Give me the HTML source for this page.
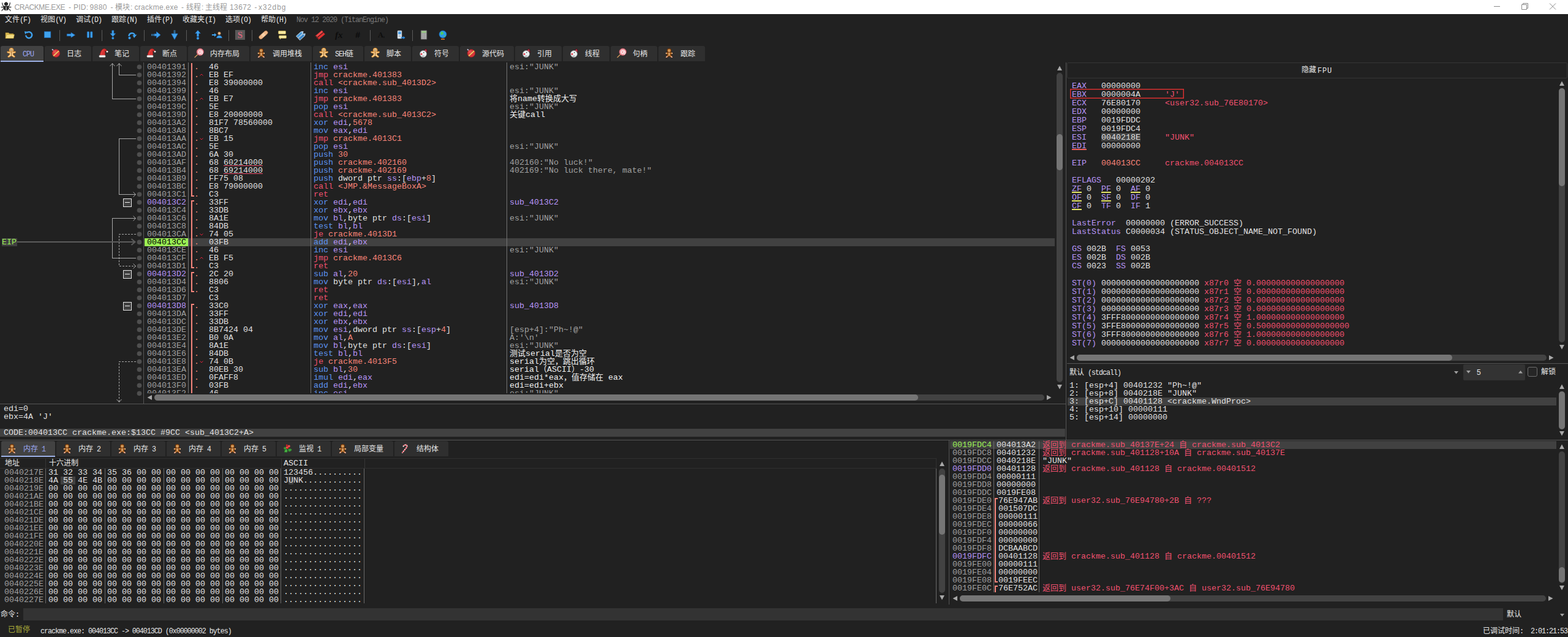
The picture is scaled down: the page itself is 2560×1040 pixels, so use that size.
<!DOCTYPE html><html><head><meta charset="utf-8"><title>x32dbg</title><style>
*{margin:0;padding:0;box-sizing:border-box}
html,body{width:2560px;height:1040px;overflow:hidden;background:#212121}
body{position:relative;font-family:"Liberation Mono","Noto Sans CJK SC",monospace;color:#e0e0e0}
.t{position:absolute;white-space:pre;}
.m{font-family:"Liberation Mono","Noto Sans CJK SC",monospace;font-size:13.333px;line-height:13px;height:13px;letter-spacing:0px}
.r{font-family:"Liberation Mono","Noto Sans CJK SC",monospace;font-size:13.333px;line-height:14px;height:14px}
.u{font-family:"Liberation Mono","Noto Sans CJK SC",monospace;font-size:11.667px;line-height:12px;height:12px;letter-spacing:-1px}
.s{font-family:"Liberation Sans","Noto Sans CJK SC",sans-serif;font-size:12px;line-height:14px}
.ua{display:inline-block;transform:scaleY(1.1);transform-origin:0 78%}
.k{display:inline-block;height:0;line-height:0;position:relative;vertical-align:baseline;letter-spacing:0;white-space:nowrap;font-family:"Liberation Sans","Noto Sans CJK SC",sans-serif;font-size:12px}
.m .k,.r .k{font-size:13px}
svg.i{position:absolute;overflow:visible}
</style></head><body><div style="position:absolute;left:0px;top:0px;width:2560px;height:23px;background:#ffffff;"></div>
<svg class="i" style="left:0;top:0" width="20" height="20" viewBox="0 0 20 20"><path d="M10 3.200c1.200 0 1.900 .9 2.400 1.600c.9 .4 1.100 1.500 .7 2.500c-.5 1.300-1.700 1.800-3.100 1.800s-2.600-.5-3.100-1.800c-.4-1-.2-2.100 .7-2.500c.5-.7 1.200-1.600 2.400-1.600z" fill="#262626"/><path d="M5.900 10c2.500-.6 5.700-.6 8.200 0c.8 2.500 .4 5-1.400 6.500c-1.500 1.100-3.900 1.100-5.400 0c-1.800-1.500-2.200-4-1.400-6.500z" fill="#262626"/><rect x="9.300" y="11.200" width="1.500" height="5.600" fill="#b4b4b4"/><path d="M6.600 10.800C4.800 9.800 4 7.500 3.600 4.800M13.400 10.800C15.200 9.800 16 7.500 16.400 4.600M6 11.600H2M14 11.600H18M6.600 14C4.800 14.600 3.600 15.800 3 17.600M13.400 14C15.200 14.600 16.400 15.800 17 17.600" stroke="#262626" stroke-width="1.200" fill="none" stroke-linecap="round"/></svg>
<div class="t s" style="left:23.5px;top:5px;color:#9a9a9a;letter-spacing:-0.436px;font-size:12px">CRACKME.EXE</div>
<div class="t s" style="left:112px;top:5px;color:#9a9a9a;letter-spacing:0.003px;font-size:12px">-</div>
<div class="t s" style="left:120px;top:5px;color:#9a9a9a;letter-spacing:0.220px;font-size:12px">PID:</div>
<div class="t s" style="left:146.5px;top:5px;color:#9a9a9a;letter-spacing:0.435px;font-size:12px">9880</div>
<div class="t s" style="left:180.5px;top:5px;color:#9a9a9a;letter-spacing:0.003px;font-size:12px">-</div>
<div class="t s" style="left:213px;top:5px;color:#9a9a9a;letter-spacing:-0.834px;font-size:12px">:</div>
<div class="t s" style="left:219.5px;top:5px;color:#9a9a9a;letter-spacing:0.298px;font-size:12px">crackme.exe</div>
<div class="t s" style="left:296px;top:5px;color:#9a9a9a;letter-spacing:0.003px;font-size:12px">-</div>
<div class="t s" style="left:329px;top:5px;color:#9a9a9a;letter-spacing:-0.834px;font-size:12px">:</div>
<div class="t s" style="left:375px;top:5px;color:#9a9a9a;letter-spacing:0.408px;font-size:12px">13672</div>
<div class="t s" style="left:415.5px;top:5px;color:#9a9a9a;letter-spacing:0.003px;font-size:12px">-</div>
<div class="t s" style="left:422px;top:5px;color:#9a9a9a;letter-spacing:1.027px;font-size:12px">x32dbg</div>
<div class="t s" style="left:188px;top:5px;color:#9a9a9a;"><span class="k" style="width:24px">模块</span></div>
<div class="t s" style="left:304px;top:5px;color:#9a9a9a;"><span class="k" style="width:24px">线程</span></div>
<div class="t s" style="left:335px;top:5px;color:#9a9a9a;"><span class="k" style="width:36px">主线程</span></div>
<svg class="i" style="left:2430px;top:0" width="130" height="23" viewBox="0 0 130 23" fill="none" stroke="#8a8a8a" stroke-width="1"><path d="M9 10.500h10"/><path d="M54.500 7.500h8v8h-8zM56.500 7.500v-2h8v8h-2"/><path d="M100 5.500l10 10M110 5.500l-10 10"/></svg>
<div class="t u" style="left:8px;top:27px;color:#e6e6e6;"><span class="k" style="width:24px">文件</span><span class="ua">(F)</span></div>
<div class="t u" style="left:66px;top:27px;color:#e6e6e6;"><span class="k" style="width:24px">视图</span><span class="ua">(V)</span></div>
<div class="t u" style="left:124px;top:27px;color:#e6e6e6;"><span class="k" style="width:24px">调试</span><span class="ua">(D)</span></div>
<div class="t u" style="left:182px;top:27px;color:#e6e6e6;"><span class="k" style="width:24px">跟踪</span><span class="ua">(N)</span></div>
<div class="t u" style="left:240px;top:27px;color:#e6e6e6;"><span class="k" style="width:24px">插件</span><span class="ua">(P)</span></div>
<div class="t u" style="left:298px;top:27px;color:#e6e6e6;"><span class="k" style="width:36px">收藏夹</span><span class="ua">(I)</span></div>
<div class="t u" style="left:368px;top:27px;color:#e6e6e6;"><span class="k" style="width:24px">选项</span><span class="ua">(O)</span></div>
<div class="t u" style="left:426px;top:27px;color:#e6e6e6;"><span class="k" style="width:24px">帮助</span><span class="ua">(H)</span></div>
<div class="t u" style="left:484px;top:27px;color:#7a7a7a;"><span class="ua">Nov 12 2020 (TitanEngine)</span></div>
<svg class="i" style="left:8px;top:49px" width="16" height="16" viewBox="0 0 16 16"><path d="M1 4.500h5l1.500 1.500H14v7.500H1z" fill="#d9b850" stroke="#a58428" stroke-width=".6"/><path d="M1 13.500L3 7.500h12.500L14 13.500z" fill="#f3dc82" stroke="#b89a38" stroke-width=".6"/></svg>
<svg class="i" style="left:39px;top:49px" width="16" height="16" viewBox="0 0 16 16"><path d="M3.200 8.500a5 5 0 1 0 1.600-4" fill="none" stroke="#3fa2ee" stroke-width="2.400"/><path d="M.8 2.200l5.600 .6l-4.200 4.200z" fill="#3fa2ee"/></svg>
<svg class="i" style="left:70px;top:49px" width="16" height="16" viewBox="0 0 16 16"><rect x="2.300" y="2.700" width="10.500" height="9.800" fill="#3fa2ee" stroke="#1f6fc0" stroke-width=".7"/></svg>
<div style="position:absolute;left:97px;top:49px;width:1px;height:18px;background:#5a5a5a;"></div>
<svg class="i" style="left:108px;top:49px" width="16" height="16" viewBox="0 0 16 16"><path d="M1.300 6.600h6.700V4.200L14.500 8.200l-6.500 4V9.800H1.300z" fill="#3fa2ee" stroke="#1f6fc0" stroke-width=".7"/></svg>
<svg class="i" style="left:139px;top:49px" width="16" height="16" viewBox="0 0 16 16"><rect x="3.300" y="2.700" width="3.200" height="9.800" rx=".8" fill="#3fa2ee" stroke="#1f6fc0" stroke-width=".6"/><rect x="8.700" y="2.700" width="3.200" height="9.800" rx=".8" fill="#3fa2ee" stroke="#1f6fc0" stroke-width=".6"/></svg>
<div style="position:absolute;left:166px;top:49px;width:1px;height:18px;background:#5a5a5a;"></div>
<svg class="i" style="left:177px;top:49px" width="16" height="16" viewBox="0 0 16 16"><path d="M5.800 .8h3v5h2.800L7.300 10.800L3 5.800h2.800z" fill="#3fa2ee" stroke="#1f6fc0" stroke-width=".6"/><circle cx="7.300" cy="13.300" r="1.700" fill="#3fa2ee" stroke="#1f6fc0" stroke-width=".6"/></svg>
<svg class="i" style="left:208px;top:49px" width="16" height="16" viewBox="0 0 16 16"><path d="M2.500 10a5 5 0 0 1 9.500-2" fill="none" stroke="#3fa2ee" stroke-width="2.400"/><path d="M8.500 8.500l7-1l-4.500 5.500z" fill="#3fa2ee"/><circle cx="3.500" cy="13" r="1.900" fill="#3fa2ee" stroke="#1f6fc0" stroke-width=".6"/></svg>
<div style="position:absolute;left:235px;top:49px;width:1px;height:18px;background:#5a5a5a;"></div>
<svg class="i" style="left:246px;top:49px" width="16" height="16" viewBox="0 0 16 16"><path d="M6 6.300h3.500V2.800L16 8l-6.500 5.200V9.700H6z" fill="#3fa2ee" stroke="#1f6fc0" stroke-width=".7"/><path d="M1 6.500h4.500v3H1z" fill="#3fa2ee" opacity=".75"/><path d="M2.500 6v4M4 6v4" stroke="#212121" stroke-width=".5"/></svg>
<svg class="i" style="left:277px;top:49px" width="16" height="16" viewBox="0 0 16 16"><path d="M6.300 6h-3.500L8 15.500l5.200-9.500H9.700V6z" fill="#3fa2ee" stroke="#1f6fc0" stroke-width=".7"/><path d="M6.500 .5h3v5h-3z" fill="#3fa2ee" opacity=".75"/><path d="M6 2h4M6 3.500h4" stroke="#212121" stroke-width=".5"/></svg>
<div style="position:absolute;left:304px;top:49px;width:1px;height:18px;background:#5a5a5a;"></div>
<svg class="i" style="left:315px;top:49px" width="16" height="16" viewBox="0 0 16 16"><path d="M6.500 10.500h3V5.500h2.800L8 .5L3.700 5.500h2.800z" fill="#3fa2ee" stroke="#1f6fc0" stroke-width=".6"/><circle cx="8" cy="13.500" r="1.900" fill="#3fa2ee" stroke="#1f6fc0" stroke-width=".6"/></svg>
<svg class="i" style="left:346px;top:49px" width="16" height="16" viewBox="0 0 16 16"><path d="M0 7h4V5l3.500 3L4 11V9H0z" fill="#3fa2ee"/><circle cx="12" cy="5.500" r="2.400" fill="#e8b888" stroke="#8a5a30" stroke-width=".5"/><path d="M7.500 13c.5-3 2.500-4 4.500-4s4 1 4.500 4z" fill="#3fa2ee" stroke="#1f6fc0" stroke-width=".5"/></svg>
<div style="position:absolute;left:373px;top:49px;width:1px;height:18px;background:#5a5a5a;"></div>
<svg class="i" style="left:384px;top:49px" width="16" height="16" viewBox="0 0 16 16"><rect width="16" height="16" fill="#585858"/><text x="8" y="13" text-anchor="middle" font-family="Liberation Serif" font-weight="bold" font-size="15" fill="#d0647a">S</text></svg>
<div style="position:absolute;left:411px;top:49px;width:1px;height:18px;background:#5a5a5a;"></div>
<svg class="i" style="left:422px;top:49px" width="16" height="16" viewBox="0 0 16 16"><g transform="rotate(-42 8 8)"><rect x="-.5" y="5" width="17" height="6" rx="3" fill="#f0b888" stroke="#c08050" stroke-width=".6"/><rect x="5.500" y="5.300" width="5" height="5.400" fill="#f8d0a8"/></g></svg>
<svg class="i" style="left:453px;top:49px" width="16" height="16" viewBox="0 0 16 16"><rect x="1.500" y="1.500" width="12" height="5" rx="1" fill="#f6e8a0" stroke="#c8a840" stroke-width=".6"/><rect x="2.500" y="9" width="12" height="4.500" rx="1" fill="#f6e8a0" stroke="#c8a840" stroke-width=".6"/><path d="M4 13.500v2l2-2z" fill="#f6e8a0"/></svg>
<svg class="i" style="left:484px;top:49px" width="16" height="16" viewBox="0 0 16 16"><g transform="rotate(-42 8 8)"><path d="M.5 3.800h10.500l3 2.100l-3 2.100H.5z" fill="#4a9ad8" stroke="#e4f0fa" stroke-width=".8"/><path d="M.5 8.600h10.500l3 2.100l-3 2.100H.5z" fill="#3a86c8" stroke="#e4f0fa" stroke-width=".8"/><circle cx="11.300" cy="5.900" r=".7" fill="#e4f0fa"/><circle cx="11.300" cy="10.700" r=".7" fill="#e4f0fa"/></g></svg>
<svg class="i" style="left:515px;top:49px" width="16" height="16" viewBox="0 0 16 16"><g transform="rotate(-40 8 8)"><path d="M.5 4h14v3.400H.5l1.700-1.700z" fill="#f04848" stroke="#b02020" stroke-width=".4"/><path d="M.5 8.600h14v3.400H.5l1.700-1.700z" fill="#e03030" stroke="#b02020" stroke-width=".4"/></g></svg>
<svg class="i" style="left:546px;top:49px" width="16" height="16" viewBox="0 0 16 16"><text x="1" y="13" font-family="Liberation Serif" font-style="italic" font-weight="bold" font-size="15" fill="#0c0c0c">fx</text></svg>
<svg class="i" style="left:577px;top:49px" width="16" height="16" viewBox="0 0 16 16"><text x="3" y="13" font-family="Liberation Sans" font-style="italic" font-weight="bold" font-size="14" fill="#0c0c0c">#</text></svg>
<div style="position:absolute;left:604px;top:49px;width:1px;height:18px;background:#5a5a5a;"></div>
<svg class="i" style="left:615px;top:49px" width="16" height="16" viewBox="0 0 16 16"><text x="2" y="12" font-family="Liberation Serif" font-weight="bold" font-size="12" fill="#0c0c0c">A</text><text x="10" y="13" font-family="Liberation Serif" font-size="7" fill="#0c0c0c">a</text></svg>
<svg class="i" style="left:646px;top:49px" width="16" height="16" viewBox="0 0 16 16"><rect x="3" y="1" width="7" height="13" rx="1" fill="#e8eef4" stroke="#8898a8" stroke-width=".6"/><rect x="4.200" y="2.500" width="4.600" height="4.500" fill="#4aa0e8"/><path d="M4.500 9h4M4.500 10.800h4" stroke="#8898a8" stroke-width=".8"/><path d="M8.500 11.500h4v-1.500l3 2.500l-3 2.500v-1.500h-4z" fill="#2a8ae0"/></svg>
<div style="position:absolute;left:673px;top:49px;width:1px;height:18px;background:#5a5a5a;"></div>
<svg class="i" style="left:684px;top:49px" width="16" height="16" viewBox="0 0 16 16"><rect x="3" y=".5" width="10" height="15" rx="1" fill="#8a8a8a" stroke="#4a4a4a" stroke-width=".6"/><rect x="4.200" y="1.800" width="7.600" height="2.800" fill="#9ed08a"/><path d="M4.500 6.500h7M4.500 8.800h7M4.500 11.100h7M4.500 13.400h7" stroke="#d8d8d8" stroke-width="1.300" stroke-dasharray="1.600 1.100"/></svg>
<svg class="i" style="left:715px;top:49px" width="16" height="16" viewBox="0 0 16 16"><circle cx="8" cy="7" r="6" fill="#2a9ae8" stroke="#1868b0" stroke-width=".6"/><path d="M5 3c2-1 3 0 4 1.500c1 1 .5 2-.8 2.500c-1.500 .5-2 1.500-3 .8C4 6.500 4 4.500 5 3zM10 8.500c1.500-.5 2.500 .5 2 2c-1 1-2.500 .5-2-2z" fill="#50c860"/><path d="M5 15h6" stroke="#e07828" stroke-width="1.600"/><path d="M8 13v2" stroke="#a05010" stroke-width="1.200"/></svg>
<div style="position:absolute;left:1px;top:75px;width:70px;height:26px;background:#424242;border-radius:3px 3px 0 0;border-bottom:2px solid #9db1e6"></div>
<svg class="i" style="left:11px;top:78px" width="16" height="16" viewBox="0 0 16 16"><g stroke="#d88420" stroke-width="1" fill="#f8d49a"><path d="M7.600 6.600C5.600 6.600 3.600 6.400 1.900 6.100C.7 5.900 .4 7 .9 7.700C1.500 8.500 3.200 8.800 5 9L5 10.800C4.800 11.600 4.200 12.200 3.300 12.800C2.300 13.500 1.500 14 1.800 14.800C2.100 15.600 3.400 15.700 4.300 15.100C5.600 14.300 6.600 13.500 7.600 12.800C8.600 13.500 9.600 14.300 10.900 15.100C11.800 15.700 13.100 15.600 13.400 14.800C13.700 14 12.900 13.500 11.900 12.800C11 12.200 10.400 11.600 10.200 10.800L10.200 9C12 8.800 13.700 8.500 14.300 7.700C14.800 7 14.500 5.900 13.300 6.100C11.600 6.400 9.600 6.600 7.600 6.600Z"/><circle cx="7.600" cy="3.900" r="3.500"/></g><circle cx="6.400" cy="3.100" r=".6" fill="#5a3410"/><circle cx="8.800" cy="3.100" r=".6" fill="#5a3410"/><path d="M5.600 4.700q2 1.900 4 0" stroke="#6b3a10" stroke-width=".8" fill="none"/><circle cx="7.600" cy="8.200" r=".65" fill="#6b3a10"/><circle cx="7.600" cy="9.900" r=".65" fill="#6b3a10"/><circle cx="7.600" cy="11.500" r=".6" fill="#6b3a10"/></svg>
<div class="t u" style="left:37px;top:83px;color:#9aa6f0;"><span class="ua">CPU</span></div>
<div style="position:absolute;left:73px;top:75px;width:76px;height:25px;background:#2f2f2f;border-radius:3px 3px 0 0"></div>
<svg class="i" style="left:83px;top:78px" width="16" height="16" viewBox="0 0 16 16"><circle cx="8.400" cy="9" r="6.400" fill="#d8353a" stroke="#8e1a20" stroke-width=".8"/><circle cx="6.500" cy="6.500" r="2.500" fill="#f07070" opacity=".45"/><path d="M3.600 12.800L12.400 4.400l1.300 1.300L4.900 14.100z" fill="#f2c860" stroke="#b8862a" stroke-width=".4"/><path d="M5 12.600l7.500-7.200" stroke="#fff6d0" stroke-width=".7" stroke-dasharray="1 1"/><path d="M2 2.300l2 1.800" stroke="#cfcfe8" stroke-width="1.600"/></svg>
<div class="t u" style="left:109px;top:83px;color:#e6e6e6;"><span class="k" style="width:24px">日志</span></div>
<div style="position:absolute;left:151px;top:75px;width:76px;height:25px;background:#2f2f2f;border-radius:3px 3px 0 0"></div>
<svg class="i" style="left:161px;top:78px" width="16" height="16" viewBox="0 0 16 16"><path d="M2 12.500C2.500 8 4.500 3 8 1.800C10.500 1 12.500 2.500 13.800 5L12.300 6.200C11.500 4.800 10.800 4.600 10.200 5C10.800 7.500 10.800 10 10.500 12.500Z" fill="#d83030" stroke="#8e1515" stroke-width=".6"/><path d="M4.500 11C5 7.500 6 4.500 8 3" stroke="#f06a60" stroke-width="1" fill="none" opacity=".6"/><rect x=".8" y="12.200" width="10.400" height="3.300" rx="1.500" fill="#f4f4f4" stroke="#bcbcbc" stroke-width=".4"/><circle cx="14" cy="6.300" r="1.400" fill="#f6f6f6"/></svg>
<div class="t u" style="left:187px;top:83px;color:#e6e6e6;"><span class="k" style="width:24px">笔记</span></div>
<div style="position:absolute;left:229px;top:75px;width:76px;height:25px;background:#2f2f2f;border-radius:3px 3px 0 0"></div>
<svg class="i" style="left:239px;top:78px" width="16" height="16" viewBox="0 0 16 16"><path d="M2 12.500C2.500 8 4.500 3 8 1.800C10.500 1 12.500 2.500 13.800 5L12.300 6.200C11.500 4.800 10.800 4.600 10.200 5C10.800 7.500 10.800 10 10.500 12.500Z" fill="#d83030" stroke="#8e1515" stroke-width=".6"/><path d="M4.500 11C5 7.500 6 4.500 8 3" stroke="#f06a60" stroke-width="1" fill="none" opacity=".6"/><rect x=".8" y="12.200" width="10.400" height="3.300" rx="1.500" fill="#f4f4f4" stroke="#bcbcbc" stroke-width=".4"/><circle cx="14" cy="6.300" r="1.400" fill="#f6f6f6"/></svg>
<div class="t u" style="left:265px;top:83px;color:#e6e6e6;"><span class="k" style="width:24px">断点</span></div>
<div style="position:absolute;left:307px;top:75px;width:100px;height:25px;background:#2f2f2f;border-radius:3px 3px 0 0"></div>
<svg class="i" style="left:317px;top:78px" width="16" height="16" viewBox="0 0 16 16"><path d="M1 15.600L6 10.800" stroke="#e0a060" stroke-width="1.300" stroke-linecap="round"/><circle cx="9.800" cy="6.800" r="5.700" fill="#f2a0a8" stroke="#c04a5a" stroke-width=".8"/><path d="M9.800 6.800c1-1 2.500 .2 1.500 1.800c-1.200 1.800-4.200 .8-4-1.800c.2-2.600 3.800-3.600 5.600-1.200c1.500 2 .8 4.500-1 5.800" fill="none" stroke="#ffffff" stroke-width="1.100"/></svg>
<div class="t u" style="left:343px;top:83px;color:#e6e6e6;"><span class="k" style="width:48px">内存布局</span></div>
<div style="position:absolute;left:409px;top:75px;width:100px;height:25px;background:#2f2f2f;border-radius:3px 3px 0 0"></div>
<svg class="i" style="left:419px;top:78px" width="16" height="16" viewBox="0 0 16 16"><g stroke="#5c2c0a" stroke-width="1" fill="#b8702c"><path d="M7.500 7C6 7 4.800 7.200 3.600 7.600C2.400 8 1.700 8.800 2 9.700C2.300 10.500 3.500 10.600 5 10.200C5 11.400 4.500 12.300 3.500 13.200C2.600 14 1.800 14.600 2.200 15.400C2.600 16.200 4 16.200 4.900 15.600C6 14.900 6.800 14 7.500 13.200C8.200 14 9 14.900 10.100 15.600C11 16.200 12.400 16.200 12.800 15.400C13.200 14.600 12.400 14 11.500 13.200C10.500 12.300 10 11.400 10 10.200C11.500 10.600 12.700 10.500 13 9.700C13.300 8.800 12.600 8 11.400 7.600C10.200 7.200 9 7 7.500 7Z"/><circle cx="7.500" cy="4.500" r="3.300"/></g><circle cx="6.500" cy="3.900" r=".6" fill="#fff4c0"/><circle cx="8.500" cy="3.900" r=".6" fill="#fff4c0"/><path d="M6 5.500q1.500 1.200 3 0" stroke="#f8d8b0" stroke-width=".7" fill="none"/><circle cx="7.500" cy="8.600" r=".7" fill="#fff4e0"/><circle cx="7.500" cy="10.400" r=".7" fill="#fff4e0"/><circle cx="7.500" cy="12.100" r=".65" fill="#fff4e0"/><ellipse cx="2.700" cy="9" rx=".7" ry="1.100" fill="#fff0d8"/><ellipse cx="12.300" cy="9" rx=".7" ry="1.100" fill="#fff0d8"/><ellipse cx="3.500" cy="14.900" rx="1.500" ry=".8" transform="rotate(-30 3.500 14.900)" fill="#f8d0d0"/><ellipse cx="11.500" cy="14.900" rx="1.500" ry=".8" transform="rotate(30 11.500 14.900)" fill="#f8d0d0"/></svg>
<div class="t u" style="left:445px;top:83px;color:#e6e6e6;"><span class="k" style="width:48px">调用堆栈</span></div>
<div style="position:absolute;left:511px;top:75px;width:82px;height:25px;background:#2f2f2f;border-radius:3px 3px 0 0"></div>
<svg class="i" style="left:521px;top:78px" width="16" height="16" viewBox="0 0 16 16"><g stroke="#d88420" stroke-width="1" fill="#f8d49a"><path d="M7.600 6.600C5.600 6.600 3.600 6.400 1.900 6.100C.7 5.900 .4 7 .9 7.700C1.500 8.500 3.200 8.800 5 9L5 10.800C4.800 11.600 4.200 12.200 3.300 12.800C2.300 13.500 1.500 14 1.800 14.800C2.100 15.600 3.400 15.700 4.300 15.100C5.600 14.300 6.600 13.500 7.600 12.800C8.600 13.500 9.600 14.300 10.900 15.100C11.800 15.700 13.100 15.600 13.400 14.800C13.700 14 12.900 13.500 11.900 12.800C11 12.200 10.400 11.600 10.200 10.800L10.200 9C12 8.800 13.700 8.500 14.300 7.700C14.800 7 14.500 5.900 13.300 6.100C11.600 6.400 9.600 6.600 7.600 6.600Z"/><circle cx="7.600" cy="3.900" r="3.500"/></g><circle cx="6.400" cy="3.100" r=".6" fill="#5a3410"/><circle cx="8.800" cy="3.100" r=".6" fill="#5a3410"/><path d="M5.600 4.700q2 1.900 4 0" stroke="#6b3a10" stroke-width=".8" fill="none"/><circle cx="7.600" cy="8.200" r=".65" fill="#6b3a10"/><circle cx="7.600" cy="9.900" r=".65" fill="#6b3a10"/><circle cx="7.600" cy="11.500" r=".6" fill="#6b3a10"/></svg>
<div class="t u" style="left:547px;top:83px;color:#e6e6e6;"><span class="ua">SEH</span><span class="k" style="width:12px">链</span></div>
<div style="position:absolute;left:595px;top:75px;width:76px;height:25px;background:#2f2f2f;border-radius:3px 3px 0 0"></div>
<svg class="i" style="left:605px;top:78px" width="16" height="16" viewBox="0 0 16 16"><g stroke="#d88420" stroke-width="1" fill="#f8d49a"><path d="M7.600 6.600C5.600 6.600 3.600 6.400 1.900 6.100C.7 5.900 .4 7 .9 7.700C1.500 8.500 3.200 8.800 5 9L5 10.800C4.800 11.600 4.200 12.200 3.300 12.800C2.300 13.500 1.500 14 1.800 14.800C2.100 15.600 3.400 15.700 4.300 15.100C5.600 14.300 6.600 13.500 7.600 12.800C8.600 13.500 9.600 14.300 10.900 15.100C11.800 15.700 13.100 15.600 13.400 14.800C13.700 14 12.900 13.500 11.900 12.800C11 12.200 10.400 11.600 10.200 10.800L10.200 9C12 8.800 13.700 8.500 14.300 7.700C14.800 7 14.500 5.900 13.300 6.100C11.600 6.400 9.600 6.600 7.600 6.600Z"/><circle cx="7.600" cy="3.900" r="3.500"/></g><circle cx="6.400" cy="3.100" r=".6" fill="#5a3410"/><circle cx="8.800" cy="3.100" r=".6" fill="#5a3410"/><path d="M5.600 4.700q2 1.900 4 0" stroke="#6b3a10" stroke-width=".8" fill="none"/><circle cx="7.600" cy="8.200" r=".65" fill="#6b3a10"/><circle cx="7.600" cy="9.900" r=".65" fill="#6b3a10"/><circle cx="7.600" cy="11.500" r=".6" fill="#6b3a10"/></svg>
<div class="t u" style="left:631px;top:83px;color:#e6e6e6;"><span class="k" style="width:24px">脚本</span></div>
<div style="position:absolute;left:673px;top:75px;width:76px;height:25px;background:#2f2f2f;border-radius:3px 3px 0 0"></div>
<svg class="i" style="left:683px;top:78px" width="16" height="16" viewBox="0 0 16 16"><path d="M8.500 4.500L13 1.500L15 7.500z" fill="#c8384a" stroke="#3a1018" stroke-width=".9"/><circle cx="8" cy="10" r="5.500" fill="#eef2f2" stroke="#8a9496" stroke-width=".7"/><circle cx="8.800" cy="7.800" r=".8" fill="#222"/><circle cx="5" cy="10.300" r="1.500" fill="#e03a4a"/><path d="M6 13.300q2 1.200 3.800-.6" stroke="#556" stroke-width=".7" fill="none"/></svg>
<div class="t u" style="left:709px;top:83px;color:#e6e6e6;"><span class="k" style="width:24px">符号</span></div>
<div style="position:absolute;left:751px;top:75px;width:88px;height:25px;background:#2f2f2f;border-radius:3px 3px 0 0"></div>
<svg class="i" style="left:761px;top:78px" width="16" height="16" viewBox="0 0 16 16"><circle cx="8.400" cy="9" r="6.400" fill="#d8353a" stroke="#8e1a20" stroke-width=".8"/><circle cx="6.500" cy="6.500" r="2.500" fill="#f07070" opacity=".45"/><path d="M3.600 12.800L12.400 4.400l1.300 1.300L4.900 14.100z" fill="#f2c860" stroke="#b8862a" stroke-width=".4"/><path d="M5 12.600l7.500-7.200" stroke="#fff6d0" stroke-width=".7" stroke-dasharray="1 1"/><path d="M2 2.300l2 1.800" stroke="#cfcfe8" stroke-width="1.600"/></svg>
<div class="t u" style="left:787px;top:83px;color:#e6e6e6;"><span class="k" style="width:36px">源代码</span></div>
<div style="position:absolute;left:841px;top:75px;width:76px;height:25px;background:#2f2f2f;border-radius:3px 3px 0 0"></div>
<svg class="i" style="left:851px;top:78px" width="16" height="16" viewBox="0 0 16 16"><path d="M8.500 4.500L13 1.500L15 7.500z" fill="#c8384a" stroke="#3a1018" stroke-width=".9"/><circle cx="8" cy="10" r="5.500" fill="#eef2f2" stroke="#8a9496" stroke-width=".7"/><circle cx="8.800" cy="7.800" r=".8" fill="#222"/><circle cx="5" cy="10.300" r="1.500" fill="#e03a4a"/><path d="M6 13.300q2 1.200 3.800-.6" stroke="#556" stroke-width=".7" fill="none"/></svg>
<div class="t u" style="left:877px;top:83px;color:#e6e6e6;"><span class="k" style="width:24px">引用</span></div>
<div style="position:absolute;left:919px;top:75px;width:76px;height:25px;background:#2f2f2f;border-radius:3px 3px 0 0"></div>
<svg class="i" style="left:929px;top:78px" width="16" height="16" viewBox="0 0 16 16"><path d="M8.500 4.500L13 1.500L15 7.500z" fill="#c8384a" stroke="#3a1018" stroke-width=".9"/><circle cx="8" cy="10" r="5.500" fill="#eef2f2" stroke="#8a9496" stroke-width=".7"/><circle cx="8.800" cy="7.800" r=".8" fill="#222"/><circle cx="5" cy="10.300" r="1.500" fill="#e03a4a"/><path d="M6 13.300q2 1.200 3.800-.6" stroke="#556" stroke-width=".7" fill="none"/></svg>
<div class="t u" style="left:955px;top:83px;color:#e6e6e6;"><span class="k" style="width:24px">线程</span></div>
<div style="position:absolute;left:997px;top:75px;width:76px;height:25px;background:#2f2f2f;border-radius:3px 3px 0 0"></div>
<svg class="i" style="left:1007px;top:78px" width="16" height="16" viewBox="0 0 16 16"><path d="M1 15.600L6 10.800" stroke="#e0a060" stroke-width="1.300" stroke-linecap="round"/><circle cx="9.800" cy="6.800" r="5.700" fill="#f2a0a8" stroke="#c04a5a" stroke-width=".8"/><path d="M9.800 6.800c1-1 2.500 .2 1.500 1.800c-1.200 1.800-4.200 .8-4-1.800c.2-2.600 3.800-3.600 5.600-1.200c1.500 2 .8 4.500-1 5.800" fill="none" stroke="#ffffff" stroke-width="1.100"/></svg>
<div class="t u" style="left:1033px;top:83px;color:#e6e6e6;"><span class="k" style="width:24px">句柄</span></div>
<div style="position:absolute;left:1075px;top:75px;width:76px;height:25px;background:#2f2f2f;border-radius:3px 3px 0 0"></div>
<svg class="i" style="left:1085px;top:78px" width="16" height="16" viewBox="0 0 16 16"><g stroke="#5c2c0a" stroke-width="1" fill="#b8702c"><path d="M7.500 7C6 7 4.800 7.200 3.600 7.600C2.400 8 1.700 8.800 2 9.700C2.300 10.500 3.500 10.600 5 10.200C5 11.400 4.500 12.300 3.500 13.200C2.600 14 1.800 14.600 2.200 15.400C2.600 16.200 4 16.200 4.900 15.600C6 14.900 6.800 14 7.500 13.200C8.200 14 9 14.900 10.100 15.600C11 16.200 12.400 16.200 12.800 15.400C13.200 14.600 12.400 14 11.500 13.200C10.500 12.300 10 11.400 10 10.200C11.500 10.600 12.700 10.500 13 9.700C13.300 8.800 12.600 8 11.400 7.600C10.200 7.200 9 7 7.500 7Z"/><circle cx="7.500" cy="4.500" r="3.300"/></g><circle cx="6.500" cy="3.900" r=".6" fill="#fff4c0"/><circle cx="8.500" cy="3.900" r=".6" fill="#fff4c0"/><path d="M6 5.500q1.500 1.200 3 0" stroke="#f8d8b0" stroke-width=".7" fill="none"/><circle cx="7.500" cy="8.600" r=".7" fill="#fff4e0"/><circle cx="7.500" cy="10.400" r=".7" fill="#fff4e0"/><circle cx="7.500" cy="12.100" r=".65" fill="#fff4e0"/><ellipse cx="2.700" cy="9" rx=".7" ry="1.100" fill="#fff0d8"/><ellipse cx="12.300" cy="9" rx=".7" ry="1.100" fill="#fff0d8"/><ellipse cx="3.500" cy="14.900" rx="1.500" ry=".8" transform="rotate(-30 3.500 14.900)" fill="#f8d0d0"/><ellipse cx="11.500" cy="14.900" rx="1.500" ry=".8" transform="rotate(30 11.500 14.900)" fill="#f8d0d0"/></svg>
<div class="t u" style="left:1111px;top:83px;color:#e6e6e6;"><span class="k" style="width:24px">跟踪</span></div>
<div style="position:absolute;left:0;top:102px;width:1722px;height:540px;overflow:hidden">
<div style="position:absolute;left:308px;top:287px;width:1414px;height:13px;background:#414141;"></div>
<div style="position:absolute;left:236px;top:287px;width:72px;height:13px;background:#9bf055;"></div>
<div style="position:absolute;left:307px;top:0px;width:1px;height:540px;background:#747474;"></div>
<div style="position:absolute;left:507px;top:0px;width:1px;height:540px;background:#747474;"></div>
<div style="position:absolute;left:827px;top:0px;width:1px;height:540px;background:#747474;"></div>
<div style="position:absolute;left:312px;top:1px;width:2px;height:218px;background:#f6867c;"></div>
<div style="position:absolute;left:312px;top:217px;width:5px;height:2px;background:#f6867c;"></div>
<div style="position:absolute;left:312px;top:225px;width:2px;height:111px;background:#f6867c;"></div>
<div style="position:absolute;left:312px;top:225px;width:5px;height:2px;background:#f6867c;"></div>
<div style="position:absolute;left:312px;top:334px;width:5px;height:2px;background:#f6867c;"></div>
<div style="position:absolute;left:312px;top:342px;width:2px;height:33px;background:#f6867c;"></div>
<div style="position:absolute;left:312px;top:342px;width:5px;height:2px;background:#f6867c;"></div>
<div style="position:absolute;left:312px;top:373px;width:5px;height:2px;background:#f6867c;"></div>
<div style="position:absolute;left:312px;top:394px;width:2px;height:600px;background:#f6867c;"></div>
<div style="position:absolute;left:312px;top:394px;width:5px;height:2px;background:#f6867c;"></div>
<div class="t m" style="left:240px;top:1px;color:#a0a0a0;">00401391</div>
<div class="t m" style="left:317px;top:1px;color:#f4857a;">.</div>
<div class="t m" style="left:341px;top:1px;color:#e0e0e0;">46</div>
<div class="t m" style="left:512px;top:1px;"><span style="color:#5c93f0">inc </span><span style="color:#b794f6">esi</span></div>
<div class="t m" style="left:832px;top:1px;color:#a0a0a0;">esi:&quot;JUNK&quot;</div>
<div class="t m" style="left:240px;top:14px;color:#a0a0a0;">00401392</div>
<div class="t m" style="left:317px;top:14px;color:#f4857a;">.</div>
<svg class="i" style="left:328.5px;top:19.5px" width="1" height="1"><path d="M-2.500 1.500L0 -1L2.500 1.500" fill="none" stroke="#e0203a" stroke-width="1"/></svg>
<div class="t m" style="left:341px;top:14px;color:#e0e0e0;">EB EF</div>
<div class="t m" style="left:512px;top:14px;"><span style="color:#f0506e">jmp </span><span style="color:#f88478">crackme.401383</span></div>
<div class="t m" style="left:240px;top:27px;color:#a0a0a0;">00401394</div>
<div class="t m" style="left:317px;top:27px;color:#f4857a;">.</div>
<div class="t m" style="left:341px;top:27px;color:#e0e0e0;">E8 39000000</div>
<div class="t m" style="left:512px;top:27px;"><span style="color:#f0506e">call </span><span style="color:#f88478">&lt;crackme.sub_4013D2&gt;</span></div>
<div class="t m" style="left:240px;top:40px;color:#a0a0a0;">00401399</div>
<div class="t m" style="left:317px;top:40px;color:#f4857a;">.</div>
<div class="t m" style="left:341px;top:40px;color:#e0e0e0;">46</div>
<div class="t m" style="left:512px;top:40px;"><span style="color:#5c93f0">inc </span><span style="color:#b794f6">esi</span></div>
<div class="t m" style="left:832px;top:40px;color:#a0a0a0;">esi:&quot;JUNK&quot;</div>
<div class="t m" style="left:240px;top:53px;color:#a0a0a0;">0040139A</div>
<div class="t m" style="left:317px;top:53px;color:#f4857a;">.</div>
<svg class="i" style="left:328.5px;top:58.5px" width="1" height="1"><path d="M-2.500 1.500L0 -1L2.500 1.500" fill="none" stroke="#e0203a" stroke-width="1"/></svg>
<div class="t m" style="left:341px;top:53px;color:#e0e0e0;">EB E7</div>
<div class="t m" style="left:512px;top:53px;"><span style="color:#f0506e">jmp </span><span style="color:#f88478">crackme.401383</span></div>
<div class="t m" style="left:832px;top:53px;color:#f0f0f0;"><span class="k" style="width:13px">将</span>name<span class="k" style="width:65px">转换成大写</span></div>
<div class="t m" style="left:240px;top:66px;color:#a0a0a0;">0040139C</div>
<div class="t m" style="left:317px;top:66px;color:#f4857a;">.</div>
<div class="t m" style="left:341px;top:66px;color:#e0e0e0;">5E</div>
<div class="t m" style="left:512px;top:66px;"><span style="color:#5c93f0">pop </span><span style="color:#b794f6">esi</span></div>
<div class="t m" style="left:832px;top:66px;color:#a0a0a0;">esi:&quot;JUNK&quot;</div>
<div class="t m" style="left:240px;top:79px;color:#a0a0a0;">0040139D</div>
<div class="t m" style="left:317px;top:79px;color:#f4857a;">.</div>
<div class="t m" style="left:341px;top:79px;color:#e0e0e0;">E8 20000000</div>
<div class="t m" style="left:512px;top:79px;"><span style="color:#f0506e">call </span><span style="color:#f88478">&lt;crackme.sub_4013C2&gt;</span></div>
<div class="t m" style="left:832px;top:79px;color:#f0f0f0;"><span class="k" style="width:26px">关键</span>call</div>
<div class="t m" style="left:240px;top:92px;color:#a0a0a0;">004013A2</div>
<div class="t m" style="left:317px;top:92px;color:#f4857a;">.</div>
<div class="t m" style="left:341px;top:92px;color:#e0e0e0;">81F7 78560000</div>
<div class="t m" style="left:512px;top:92px;"><span style="color:#5c93f0">xor </span><span style="color:#b794f6">edi</span><span style="color:#e0e0e0">,</span><span style="color:#f88478">5678</span></div>
<div class="t m" style="left:240px;top:105px;color:#a0a0a0;">004013A8</div>
<div class="t m" style="left:317px;top:105px;color:#f4857a;">.</div>
<div class="t m" style="left:341px;top:105px;color:#e0e0e0;">8BC7</div>
<div class="t m" style="left:512px;top:105px;"><span style="color:#5c93f0">mov </span><span style="color:#b794f6">eax</span><span style="color:#e0e0e0">,</span><span style="color:#b794f6">edi</span></div>
<div class="t m" style="left:240px;top:118px;color:#a0a0a0;">004013AA</div>
<div class="t m" style="left:317px;top:118px;color:#f4857a;">.</div>
<svg class="i" style="left:328.5px;top:124.5px" width="1" height="1"><path d="M-2.500 -1.500L0 1L2.500 -1.500" fill="none" stroke="#e0203a" stroke-width="1"/></svg>
<div class="t m" style="left:341px;top:118px;color:#e0e0e0;">EB 15</div>
<div class="t m" style="left:512px;top:118px;"><span style="color:#f0506e">jmp </span><span style="color:#f88478">crackme.4013C1</span></div>
<div class="t m" style="left:240px;top:131px;color:#a0a0a0;">004013AC</div>
<div class="t m" style="left:317px;top:131px;color:#f4857a;">.</div>
<div class="t m" style="left:341px;top:131px;color:#e0e0e0;">5E</div>
<div class="t m" style="left:512px;top:131px;"><span style="color:#5c93f0">pop </span><span style="color:#b794f6">esi</span></div>
<div class="t m" style="left:832px;top:131px;color:#a0a0a0;">esi:&quot;JUNK&quot;</div>
<div class="t m" style="left:240px;top:144px;color:#a0a0a0;">004013AD</div>
<div class="t m" style="left:317px;top:144px;color:#f4857a;">.</div>
<div class="t m" style="left:341px;top:144px;color:#e0e0e0;">6A 30</div>
<div class="t m" style="left:512px;top:144px;"><span style="color:#5c93f0">push </span><span style="color:#f88478">30</span></div>
<div class="t m" style="left:240px;top:157px;color:#a0a0a0;">004013AF</div>
<div class="t m" style="left:317px;top:157px;color:#f4857a;">.</div>
<div class="t m" style="left:341px;top:157px;color:#e0e0e0;">68 <span style="border-bottom:1px solid #f0506e;display:inline-block;height:12px">60214000</span></div>
<div class="t m" style="left:512px;top:157px;"><span style="color:#5c93f0">push </span><span style="color:#f88478">crackme.402160</span></div>
<div class="t m" style="left:832px;top:157px;color:#a0a0a0;">402160:&quot;No luck!&quot;</div>
<div class="t m" style="left:240px;top:170px;color:#a0a0a0;">004013B4</div>
<div class="t m" style="left:317px;top:170px;color:#f4857a;">.</div>
<div class="t m" style="left:341px;top:170px;color:#e0e0e0;">68 <span style="border-bottom:1px solid #f0506e;display:inline-block;height:12px">69214000</span></div>
<div class="t m" style="left:512px;top:170px;"><span style="color:#5c93f0">push </span><span style="color:#f88478">crackme.402169</span></div>
<div class="t m" style="left:832px;top:170px;color:#a0a0a0;">402169:&quot;No luck there, mate!&quot;</div>
<div class="t m" style="left:240px;top:183px;color:#a0a0a0;">004013B9</div>
<div class="t m" style="left:317px;top:183px;color:#f4857a;">.</div>
<div class="t m" style="left:341px;top:183px;color:#e0e0e0;">FF75 08</div>
<div class="t m" style="left:512px;top:183px;"><span style="color:#5c93f0">push </span><span style="color:#e0e0e0">dword ptr </span><span style="color:#b794f6">ss</span><span style="color:#e0e0e0">:[</span><span style="color:#b794f6">ebp</span><span style="color:#e0e0e0">+</span><span style="color:#f88478">8</span><span style="color:#e0e0e0">]</span></div>
<div class="t m" style="left:240px;top:196px;color:#a0a0a0;">004013BC</div>
<div class="t m" style="left:317px;top:196px;color:#f4857a;">.</div>
<div class="t m" style="left:341px;top:196px;color:#e0e0e0;">E8 79000000</div>
<div class="t m" style="left:512px;top:196px;"><span style="color:#f0506e">call </span><span style="color:#f88478">&lt;JMP.&amp;MessageBoxA&gt;</span></div>
<div class="t m" style="left:240px;top:209px;color:#a0a0a0;">004013C1</div>
<div class="t m" style="left:317px;top:209px;color:#f4857a;">.</div>
<div class="t m" style="left:341px;top:209px;color:#e0e0e0;">C3</div>
<div class="t m" style="left:512px;top:209px;"><span style="color:#f0506e">ret</span></div>
<div class="t m" style="left:240px;top:222px;color:#b794f6;">004013C2</div>
<div class="t m" style="left:317px;top:222px;color:#f4857a;">.</div>
<div class="t m" style="left:341px;top:222px;color:#e0e0e0;">33FF</div>
<div class="t m" style="left:512px;top:222px;"><span style="color:#5c93f0">xor </span><span style="color:#b794f6">edi</span><span style="color:#e0e0e0">,</span><span style="color:#b794f6">edi</span></div>
<div class="t m" style="left:832px;top:222px;color:#b794f6;">sub_4013C2</div>
<div class="t m" style="left:240px;top:235px;color:#a0a0a0;">004013C4</div>
<div class="t m" style="left:317px;top:235px;color:#f4857a;">.</div>
<div class="t m" style="left:341px;top:235px;color:#e0e0e0;">33DB</div>
<div class="t m" style="left:512px;top:235px;"><span style="color:#5c93f0">xor </span><span style="color:#b794f6">ebx</span><span style="color:#e0e0e0">,</span><span style="color:#b794f6">ebx</span></div>
<div class="t m" style="left:240px;top:248px;color:#a0a0a0;">004013C6</div>
<div class="t m" style="left:317px;top:248px;color:#f4857a;">.</div>
<div class="t m" style="left:341px;top:248px;color:#e0e0e0;">8A1E</div>
<div class="t m" style="left:512px;top:248px;"><span style="color:#5c93f0">mov </span><span style="color:#b794f6">bl</span><span style="color:#e0e0e0">,byte ptr </span><span style="color:#b794f6">ds</span><span style="color:#e0e0e0">:[</span><span style="color:#b794f6">esi</span><span style="color:#e0e0e0">]</span></div>
<div class="t m" style="left:832px;top:248px;color:#a0a0a0;">esi:&quot;JUNK&quot;</div>
<div class="t m" style="left:240px;top:261px;color:#a0a0a0;">004013C8</div>
<div class="t m" style="left:317px;top:261px;color:#f4857a;">.</div>
<div class="t m" style="left:341px;top:261px;color:#e0e0e0;">84DB</div>
<div class="t m" style="left:512px;top:261px;"><span style="color:#5c93f0">test </span><span style="color:#b794f6">bl</span><span style="color:#e0e0e0">,</span><span style="color:#b794f6">bl</span></div>
<div class="t m" style="left:240px;top:274px;color:#a0a0a0;">004013CA</div>
<div class="t m" style="left:317px;top:274px;color:#f4857a;">.</div>
<svg class="i" style="left:328.5px;top:280.5px" width="1" height="1"><path d="M-2.500 -1.500L0 1L2.500 -1.500" fill="none" stroke="#e0203a" stroke-width="1"/></svg>
<div class="t m" style="left:341px;top:274px;color:#e0e0e0;">74 05</div>
<div class="t m" style="left:512px;top:274px;"><span style="color:#f0506e">je </span><span style="color:#f88478">crackme.4013D1</span></div>
<div class="t m" style="left:240px;top:287px;color:#000000;">004013CC</div>
<div class="t m" style="left:317px;top:287px;color:#f4857a;">.</div>
<div class="t m" style="left:341px;top:287px;color:#e0e0e0;">03FB</div>
<div class="t m" style="left:512px;top:287px;"><span style="color:#5c93f0">add </span><span style="color:#b794f6">edi</span><span style="color:#e0e0e0">,</span><span style="color:#b794f6">ebx</span></div>
<div class="t m" style="left:240px;top:300px;color:#a0a0a0;">004013CE</div>
<div class="t m" style="left:317px;top:300px;color:#f4857a;">.</div>
<div class="t m" style="left:341px;top:300px;color:#e0e0e0;">46</div>
<div class="t m" style="left:512px;top:300px;"><span style="color:#5c93f0">inc </span><span style="color:#b794f6">esi</span></div>
<div class="t m" style="left:832px;top:300px;color:#a0a0a0;">esi:&quot;JUNK&quot;</div>
<div class="t m" style="left:240px;top:313px;color:#a0a0a0;">004013CF</div>
<div class="t m" style="left:317px;top:313px;color:#f4857a;">.</div>
<svg class="i" style="left:328.5px;top:318.5px" width="1" height="1"><path d="M-2.500 1.500L0 -1L2.500 1.500" fill="none" stroke="#e0203a" stroke-width="1"/></svg>
<div class="t m" style="left:341px;top:313px;color:#e0e0e0;">EB F5</div>
<div class="t m" style="left:512px;top:313px;"><span style="color:#f0506e">jmp </span><span style="color:#f88478">crackme.4013C6</span></div>
<div class="t m" style="left:240px;top:326px;color:#a0a0a0;">004013D1</div>
<div class="t m" style="left:317px;top:326px;color:#f4857a;">.</div>
<div class="t m" style="left:341px;top:326px;color:#e0e0e0;">C3</div>
<div class="t m" style="left:512px;top:326px;"><span style="color:#f0506e">ret</span></div>
<div class="t m" style="left:240px;top:339px;color:#b794f6;">004013D2</div>
<div class="t m" style="left:317px;top:339px;color:#f4857a;">.</div>
<div class="t m" style="left:341px;top:339px;color:#e0e0e0;">2C 20</div>
<div class="t m" style="left:512px;top:339px;"><span style="color:#5c93f0">sub </span><span style="color:#b794f6">al</span><span style="color:#e0e0e0">,</span><span style="color:#f88478">20</span></div>
<div class="t m" style="left:832px;top:339px;color:#b794f6;">sub_4013D2</div>
<div class="t m" style="left:240px;top:352px;color:#a0a0a0;">004013D4</div>
<div class="t m" style="left:317px;top:352px;color:#f4857a;">.</div>
<div class="t m" style="left:341px;top:352px;color:#e0e0e0;">8806</div>
<div class="t m" style="left:512px;top:352px;"><span style="color:#5c93f0">mov </span><span style="color:#e0e0e0">byte ptr </span><span style="color:#b794f6">ds</span><span style="color:#e0e0e0">:[</span><span style="color:#b794f6">esi</span><span style="color:#e0e0e0">],</span><span style="color:#b794f6">al</span></div>
<div class="t m" style="left:832px;top:352px;color:#a0a0a0;">esi:&quot;JUNK&quot;</div>
<div class="t m" style="left:240px;top:365px;color:#a0a0a0;">004013D6</div>
<div class="t m" style="left:317px;top:365px;color:#f4857a;">.</div>
<div class="t m" style="left:341px;top:365px;color:#e0e0e0;">C3</div>
<div class="t m" style="left:512px;top:365px;"><span style="color:#f0506e">ret</span></div>
<div class="t m" style="left:240px;top:378px;color:#a0a0a0;">004013D7</div>
<div class="t m" style="left:341px;top:378px;color:#e0e0e0;">C3</div>
<div class="t m" style="left:512px;top:378px;"><span style="color:#f0506e">ret</span></div>
<div class="t m" style="left:240px;top:391px;color:#b794f6;">004013D8</div>
<div class="t m" style="left:317px;top:391px;color:#f4857a;">.</div>
<div class="t m" style="left:341px;top:391px;color:#e0e0e0;">33C0</div>
<div class="t m" style="left:512px;top:391px;"><span style="color:#5c93f0">xor </span><span style="color:#b794f6">eax</span><span style="color:#e0e0e0">,</span><span style="color:#b794f6">eax</span></div>
<div class="t m" style="left:832px;top:391px;color:#b794f6;">sub_4013D8</div>
<div class="t m" style="left:240px;top:404px;color:#a0a0a0;">004013DA</div>
<div class="t m" style="left:317px;top:404px;color:#f4857a;">.</div>
<div class="t m" style="left:341px;top:404px;color:#e0e0e0;">33FF</div>
<div class="t m" style="left:512px;top:404px;"><span style="color:#5c93f0">xor </span><span style="color:#b794f6">edi</span><span style="color:#e0e0e0">,</span><span style="color:#b794f6">edi</span></div>
<div class="t m" style="left:240px;top:417px;color:#a0a0a0;">004013DC</div>
<div class="t m" style="left:317px;top:417px;color:#f4857a;">.</div>
<div class="t m" style="left:341px;top:417px;color:#e0e0e0;">33DB</div>
<div class="t m" style="left:512px;top:417px;"><span style="color:#5c93f0">xor </span><span style="color:#b794f6">ebx</span><span style="color:#e0e0e0">,</span><span style="color:#b794f6">ebx</span></div>
<div class="t m" style="left:240px;top:430px;color:#a0a0a0;">004013DE</div>
<div class="t m" style="left:317px;top:430px;color:#f4857a;">.</div>
<div class="t m" style="left:341px;top:430px;color:#e0e0e0;">8B7424 04</div>
<div class="t m" style="left:512px;top:430px;"><span style="color:#5c93f0">mov </span><span style="color:#b794f6">esi</span><span style="color:#e0e0e0">,dword ptr </span><span style="color:#b794f6">ss</span><span style="color:#e0e0e0">:[</span><span style="color:#b794f6">esp</span><span style="color:#e0e0e0">+</span><span style="color:#f88478">4</span><span style="color:#e0e0e0">]</span></div>
<div class="t m" style="left:832px;top:430px;color:#a0a0a0;">[esp+4]:&quot;Ph~!@&quot;</div>
<div class="t m" style="left:240px;top:443px;color:#a0a0a0;">004013E2</div>
<div class="t m" style="left:317px;top:443px;color:#f4857a;">.</div>
<div class="t m" style="left:341px;top:443px;color:#e0e0e0;">B0 0A</div>
<div class="t m" style="left:512px;top:443px;"><span style="color:#5c93f0">mov </span><span style="color:#b794f6">al</span><span style="color:#e0e0e0">,</span><span style="color:#f88478">A</span></div>
<div class="t m" style="left:832px;top:443px;color:#a0a0a0;">A:&#x27;\n&#x27;</div>
<div class="t m" style="left:240px;top:456px;color:#a0a0a0;">004013E4</div>
<div class="t m" style="left:317px;top:456px;color:#f4857a;">.</div>
<div class="t m" style="left:341px;top:456px;color:#e0e0e0;">8A1E</div>
<div class="t m" style="left:512px;top:456px;"><span style="color:#5c93f0">mov </span><span style="color:#b794f6">bl</span><span style="color:#e0e0e0">,byte ptr </span><span style="color:#b794f6">ds</span><span style="color:#e0e0e0">:[</span><span style="color:#b794f6">esi</span><span style="color:#e0e0e0">]</span></div>
<div class="t m" style="left:832px;top:456px;color:#a0a0a0;">esi:&quot;JUNK&quot;</div>
<div class="t m" style="left:240px;top:469px;color:#a0a0a0;">004013E6</div>
<div class="t m" style="left:317px;top:469px;color:#f4857a;">.</div>
<div class="t m" style="left:341px;top:469px;color:#e0e0e0;">84DB</div>
<div class="t m" style="left:512px;top:469px;"><span style="color:#5c93f0">test </span><span style="color:#b794f6">bl</span><span style="color:#e0e0e0">,</span><span style="color:#b794f6">bl</span></div>
<div class="t m" style="left:832px;top:469px;color:#f0f0f0;"><span class="k" style="width:26px">测试</span>serial<span class="k" style="width:52px">是否为空</span></div>
<div class="t m" style="left:240px;top:482px;color:#a0a0a0;">004013E8</div>
<div class="t m" style="left:317px;top:482px;color:#f4857a;">.</div>
<svg class="i" style="left:328.5px;top:488.5px" width="1" height="1"><path d="M-2.500 -1.500L0 1L2.500 -1.500" fill="none" stroke="#e0203a" stroke-width="1"/></svg>
<div class="t m" style="left:341px;top:482px;color:#e0e0e0;">74 0B</div>
<div class="t m" style="left:512px;top:482px;"><span style="color:#f0506e">je </span><span style="color:#f88478">crackme.4013F5</span></div>
<div class="t m" style="left:832px;top:482px;color:#f0f0f0;">serial<span class="k" style="width:91px">为空，跳出循环</span></div>
<div class="t m" style="left:240px;top:495px;color:#a0a0a0;">004013EA</div>
<div class="t m" style="left:317px;top:495px;color:#f4857a;">.</div>
<div class="t m" style="left:341px;top:495px;color:#e0e0e0;">80EB 30</div>
<div class="t m" style="left:512px;top:495px;"><span style="color:#5c93f0">sub </span><span style="color:#b794f6">bl</span><span style="color:#e0e0e0">,</span><span style="color:#f88478">30</span></div>
<div class="t m" style="left:832px;top:495px;color:#f0f0f0;">serial<span class="k" style="width:13px">（</span>ASCII<span class="k" style="width:13px">）</span>-30</div>
<div class="t m" style="left:240px;top:508px;color:#a0a0a0;">004013ED</div>
<div class="t m" style="left:317px;top:508px;color:#f4857a;">.</div>
<div class="t m" style="left:341px;top:508px;color:#e0e0e0;">0FAFF8</div>
<div class="t m" style="left:512px;top:508px;"><span style="color:#5c93f0">imul </span><span style="color:#b794f6">edi</span><span style="color:#e0e0e0">,</span><span style="color:#b794f6">eax</span></div>
<div class="t m" style="left:832px;top:508px;color:#f0f0f0;">edi=edi*eax<span class="k" style="width:65px">，值存储在</span> eax</div>
<div class="t m" style="left:240px;top:521px;color:#a0a0a0;">004013F0</div>
<div class="t m" style="left:317px;top:521px;color:#f4857a;">.</div>
<div class="t m" style="left:341px;top:521px;color:#e0e0e0;">03FB</div>
<div class="t m" style="left:512px;top:521px;"><span style="color:#5c93f0">add </span><span style="color:#b794f6">edi</span><span style="color:#e0e0e0">,</span><span style="color:#b794f6">ebx</span></div>
<div class="t m" style="left:832px;top:521px;color:#f0f0f0;">edi=edi+ebx</div>
<div class="t m" style="left:240px;top:534px;color:#a0a0a0;">004013F2</div>
<div class="t m" style="left:317px;top:534px;color:#f4857a;">.</div>
<div class="t m" style="left:341px;top:534px;color:#e0e0e0;">46</div>
<div class="t m" style="left:512px;top:534px;"><span style="color:#5c93f0">inc </span><span style="color:#b794f6">esi</span></div>
<div class="t m" style="left:832px;top:534px;color:#a0a0a0;">esi:&quot;JUNK&quot;</div>
</div>
<div style="position:absolute;left:234px;top:102px;width:1px;height:557px;background:#555555;"></div>
<svg class="i" style="left:223px;top:105px" width="9" height="9"><circle cx="4.500" cy="4.300" r="3.850" fill="#4f4f4f"/></svg>
<svg class="i" style="left:223px;top:118px" width="9" height="9"><circle cx="4.500" cy="4.300" r="3.850" fill="#4f4f4f"/></svg>
<svg class="i" style="left:223px;top:131px" width="9" height="9"><circle cx="4.500" cy="4.300" r="3.850" fill="#4f4f4f"/></svg>
<svg class="i" style="left:223px;top:144px" width="9" height="9"><circle cx="4.500" cy="4.300" r="3.850" fill="#4f4f4f"/></svg>
<svg class="i" style="left:223px;top:157px" width="9" height="9"><circle cx="4.500" cy="4.300" r="3.850" fill="#4f4f4f"/></svg>
<svg class="i" style="left:223px;top:170px" width="9" height="9"><circle cx="4.500" cy="4.300" r="3.850" fill="#4f4f4f"/></svg>
<svg class="i" style="left:223px;top:183px" width="9" height="9"><circle cx="4.500" cy="4.300" r="3.850" fill="#4f4f4f"/></svg>
<svg class="i" style="left:223px;top:196px" width="9" height="9"><circle cx="4.500" cy="4.300" r="3.850" fill="#4f4f4f"/></svg>
<svg class="i" style="left:223px;top:209px" width="9" height="9"><circle cx="4.500" cy="4.300" r="3.850" fill="#4f4f4f"/></svg>
<svg class="i" style="left:223px;top:222px" width="9" height="9"><circle cx="4.500" cy="4.300" r="3.850" fill="#4f4f4f"/></svg>
<svg class="i" style="left:223px;top:235px" width="9" height="9"><circle cx="4.500" cy="4.300" r="3.850" fill="#4f4f4f"/></svg>
<svg class="i" style="left:223px;top:248px" width="9" height="9"><circle cx="4.500" cy="4.300" r="3.850" fill="#4f4f4f"/></svg>
<svg class="i" style="left:223px;top:261px" width="9" height="9"><circle cx="4.500" cy="4.300" r="3.850" fill="#4f4f4f"/></svg>
<svg class="i" style="left:223px;top:274px" width="9" height="9"><circle cx="4.500" cy="4.300" r="3.850" fill="#4f4f4f"/></svg>
<svg class="i" style="left:223px;top:287px" width="9" height="9"><circle cx="4.500" cy="4.300" r="3.850" fill="#4f4f4f"/></svg>
<svg class="i" style="left:223px;top:300px" width="9" height="9"><circle cx="4.500" cy="4.300" r="3.850" fill="#4f4f4f"/></svg>
<svg class="i" style="left:223px;top:313px" width="9" height="9"><circle cx="4.500" cy="4.300" r="3.850" fill="#4f4f4f"/></svg>
<svg class="i" style="left:223px;top:326px" width="9" height="9"><circle cx="4.500" cy="4.300" r="3.850" fill="#4f4f4f"/></svg>
<svg class="i" style="left:223px;top:339px" width="9" height="9"><circle cx="4.500" cy="4.300" r="3.850" fill="#4f4f4f"/></svg>
<svg class="i" style="left:223px;top:352px" width="9" height="9"><circle cx="4.500" cy="4.300" r="3.850" fill="#4f4f4f"/></svg>
<svg class="i" style="left:223px;top:365px" width="9" height="9"><circle cx="4.500" cy="4.300" r="3.850" fill="#4f4f4f"/></svg>
<svg class="i" style="left:223px;top:378px" width="9" height="9"><circle cx="4.500" cy="4.300" r="3.850" fill="#4f4f4f"/></svg>
<svg class="i" style="left:223px;top:391px" width="9" height="9"><circle cx="4.500" cy="4.300" r="3.850" fill="#4f4f4f"/></svg>
<svg class="i" style="left:223px;top:404px" width="9" height="9"><circle cx="4.500" cy="4.300" r="3.850" fill="#4f4f4f"/></svg>
<svg class="i" style="left:223px;top:417px" width="9" height="9"><circle cx="4.500" cy="4.300" r="3.850" fill="#4f4f4f"/></svg>
<svg class="i" style="left:223px;top:430px" width="9" height="9"><circle cx="4.500" cy="4.300" r="3.850" fill="#4f4f4f"/></svg>
<svg class="i" style="left:223px;top:443px" width="9" height="9"><circle cx="4.500" cy="4.300" r="3.850" fill="#4f4f4f"/></svg>
<svg class="i" style="left:223px;top:456px" width="9" height="9"><circle cx="4.500" cy="4.300" r="3.850" fill="#4f4f4f"/></svg>
<svg class="i" style="left:223px;top:469px" width="9" height="9"><circle cx="4.500" cy="4.300" r="3.850" fill="#4f4f4f"/></svg>
<svg class="i" style="left:223px;top:482px" width="9" height="9"><circle cx="4.500" cy="4.300" r="3.850" fill="#4f4f4f"/></svg>
<svg class="i" style="left:223px;top:495px" width="9" height="9"><circle cx="4.500" cy="4.300" r="3.850" fill="#4f4f4f"/></svg>
<svg class="i" style="left:223px;top:508px" width="9" height="9"><circle cx="4.500" cy="4.300" r="3.850" fill="#4f4f4f"/></svg>
<svg class="i" style="left:223px;top:521px" width="9" height="9"><circle cx="4.500" cy="4.300" r="3.850" fill="#4f4f4f"/></svg>
<svg class="i" style="left:223px;top:534px" width="9" height="9"><circle cx="4.500" cy="4.300" r="3.850" fill="#4f4f4f"/></svg>
<svg class="i" style="left:223px;top:547px" width="9" height="9"><circle cx="4.500" cy="4.300" r="3.850" fill="#4f4f4f"/></svg>
<svg class="i" style="left:223px;top:560px" width="9" height="9"><circle cx="4.500" cy="4.300" r="3.850" fill="#4f4f4f"/></svg>
<svg class="i" style="left:223px;top:573px" width="9" height="9"><circle cx="4.500" cy="4.300" r="3.850" fill="#4f4f4f"/></svg>
<svg class="i" style="left:223px;top:586px" width="9" height="9"><circle cx="4.500" cy="4.300" r="3.850" fill="#4f4f4f"/></svg>
<svg class="i" style="left:223px;top:599px" width="9" height="9"><circle cx="4.500" cy="4.300" r="3.850" fill="#4f4f4f"/></svg>
<svg class="i" style="left:223px;top:612px" width="9" height="9"><circle cx="4.500" cy="4.300" r="3.850" fill="#4f4f4f"/></svg>
<svg class="i" style="left:223px;top:625px" width="9" height="9"><circle cx="4.500" cy="4.300" r="3.850" fill="#4f4f4f"/></svg>
<svg class="i" style="left:223px;top:638px" width="9" height="9"><circle cx="4.500" cy="4.300" r="3.850" fill="#4f4f4f"/></svg>
<svg class="i" style="left:0;top:102px" width="234" height="557" viewBox="0 102 234 557" fill="none" stroke="#a8a8a8" stroke-width="1" shape-rendering="crispEdges"><path d="M222 161.500H183.500V104"/><path d="M222 122.500H194.500V104"/><path d="M179.500 108L183.500 103.500L187.500 108M190.500 108L194.500 103.500L198.500 108" shape-rendering="auto"/><path d="M222 226.500H194.500V317.500H221"/><path d="M217.5 313.5L221.5 317.5L217.5 321.5" shape-rendering="auto"/><path d="M222 421.500H183.500V356.500H221"/><path d="M217.5 352.5L221.5 356.5L217.5 360.5" shape-rendering="auto"/><path d="M222 382.500H194.500V434.500H221" stroke-dasharray="3 2"/><path d="M217.5 430.5L221.5 434.5L217.5 438.5" shape-rendering="auto"/><path d="M222 590.500H194.500V656" stroke-dasharray="3 2"/><path d="M190.500 652L194.500 656.500L198.500 652" shape-rendering="auto"/><path d="M28 395H220" stroke="#5c5c5c" stroke-width="2"/><path d="M214.500 390L220.500 395L214.500 400" stroke="#5c5c5c" stroke-width="2" shape-rendering="auto"/></svg>
<div style="position:absolute;left:3px;top:389px;width:25px;height:13px;background:#414141;"></div>
<div class="t m" style="left:3px;top:389px;color:#9bf055;">EIP</div>
<div style="position:absolute;left:201px;top:324px;width:14px;height:14px;border:1px solid #e8e8e8;background:#404040"></div>
<div style="position:absolute;left:204px;top:330px;width:8px;height:1px;background:#f0f0f0;"></div>
<div style="position:absolute;left:201px;top:441px;width:14px;height:14px;border:1px solid #e8e8e8;background:#404040"></div>
<div style="position:absolute;left:204px;top:447px;width:8px;height:1px;background:#f0f0f0;"></div>
<div style="position:absolute;left:201px;top:493px;width:14px;height:14px;border:1px solid #e8e8e8;background:#404040"></div>
<div style="position:absolute;left:204px;top:499px;width:8px;height:1px;background:#f0f0f0;"></div>
<svg class="i" style="left:1725px;top:107px" width="10" height="8"><path d="M1 8L5 .5L9 8z" fill="#a8a8a8"/></svg>
<svg class="i" style="left:1725px;top:628px" width="10" height="8"><path d="M1 0L5 7.500L9 0z" fill="#a8a8a8"/></svg>
<div style="position:absolute;left:1725px;top:119px;width:10px;height:505px;background:#424242;border-radius:5px"></div>
<div style="position:absolute;left:1725px;top:219px;width:10px;height:59px;background:#757575;border-radius:5px"></div>
<svg class="i" style="left:240px;top:644px" width="8" height="10"><path d="M8 1L.5 5L8 9z" fill="#a8a8a8"/></svg>
<svg class="i" style="left:1709px;top:644px" width="8" height="10"><path d="M0 1L7.500 5L0 9z" fill="#a8a8a8"/></svg>
<div style="position:absolute;left:252px;top:644px;width:1453px;height:10px;background:#424242;border-radius:5px"></div>
<div style="position:absolute;left:252px;top:644px;width:1247px;height:10px;background:#757575;border-radius:5px"></div>
<div style="position:absolute;left:0px;top:659px;width:1740px;height:1px;background:#555555;"></div>
<div class="t m" style="left:6px;top:661px;color:#e0e0e0;">edi=0</div>
<div class="t m" style="left:6px;top:674px;color:#e0e0e0;">ebx=4A 'J'</div>
<div style="position:absolute;left:0px;top:700px;width:1739px;height:13px;background:#414141;"></div>
<div class="t m" style="left:6px;top:700px;color:#e0e0e0;">CODE:004013CC crackme.exe:$13CC #9CC &lt;sub_4013C2+A&gt;</div>
<div style="position:absolute;left:1740px;top:102px;width:1px;height:616px;background:#555555;"></div>
<div style="position:absolute;left:0px;top:718px;width:2560px;height:1px;background:#555555;"></div>
<div style="position:absolute;left:1742px;top:102px;width:817px;height:26px;border:1px solid #353535;border-radius:2px"></div>
<div class="t u" style="left:2125px;top:109px;color:#e6e6e6;"><span class="k" style="width:24px">隐藏</span></div>
<div class="t m" style="left:2151px;top:110px;color:#e6e6e6;font-size:12px;letter-spacing:0.8px;line-height:12px">FPU</div>
<div class="t r" style="left:1750px;top:134px;color:#b794f6;">EAX</div>
<div class="t r" style="left:1798px;top:134px;color:#e0e0e0;">00000000</div>
<div class="t r" style="left:1750px;top:148px;color:#b794f6;">EBX</div>
<div class="t r" style="left:1798px;top:148px;color:#e0e0e0;">0000004A</div>
<div class="t r" style="left:1902px;top:148px;color:#f0506e;">&#x27;J&#x27;</div>
<div class="t r" style="left:1750px;top:162px;color:#b794f6;">ECX</div>
<div class="t r" style="left:1798px;top:162px;color:#e0e0e0;">76E80170</div>
<div class="t r" style="left:1902px;top:162px;color:#f0506e;">&lt;user32.sub_76E80170&gt;</div>
<div class="t r" style="left:1750px;top:176px;color:#b794f6;">EDX</div>
<div class="t r" style="left:1798px;top:176px;color:#e0e0e0;">00000000</div>
<div class="t r" style="left:1750px;top:190px;color:#b794f6;">EBP</div>
<div class="t r" style="left:1798px;top:190px;color:#e0e0e0;">0019FDDC</div>
<div class="t r" style="left:1750px;top:204px;color:#b794f6;">ESP</div>
<div class="t r" style="left:1798px;top:204px;color:#e0e0e0;">0019FDC4</div>
<div style="position:absolute;left:1798px;top:217px;width:64px;height:14px;background:#414141;"></div>
<div class="t r" style="left:1750px;top:218px;color:#b794f6;">ESI</div>
<div class="t r" style="left:1798px;top:218px;color:#e0e0e0;">0040218E</div>
<div class="t r" style="left:1902px;top:218px;color:#f0506e;">&quot;JUNK&quot;</div>
<div class="t r" style="left:1750px;top:232px;color:#b794f6;"><span style="border-bottom:2px solid #f0605a;display:inline-block;height:14px;line-height:14px;position:relative;top:-1px;padding-top:1px">EDI</span></div>
<div class="t r" style="left:1798px;top:232px;color:#e0e0e0;">00000000</div>
<div class="t r" style="left:1750px;top:260px;color:#b794f6;">EIP</div>
<div class="t r" style="left:1798px;top:260px;color:#f88478;">004013CC</div>
<div class="t r" style="left:1902px;top:260px;color:#f0506e;">crackme.004013CC</div>
<div class="t r" style="left:1750px;top:288px;color:#b794f6;">EFLAGS</div>
<div class="t r" style="left:1822px;top:288px;color:#e0e0e0;">00000202</div>
<div class="t r" style="left:1750px;top:302px;color:#b794f6;"><span style="border-bottom:2px solid #e6e668;display:inline-block;height:14px;line-height:14px;position:relative;top:-1px;padding-top:1px">ZF</span></div>
<div class="t r" style="left:1774px;top:302px;color:#e0e0e0;">0</div>
<div class="t r" style="left:1798px;top:302px;color:#b794f6;"><span style="border-bottom:2px solid #e6e668;display:inline-block;height:14px;line-height:14px;position:relative;top:-1px;padding-top:1px">PF</span></div>
<div class="t r" style="left:1822px;top:302px;color:#e0e0e0;">0</div>
<div class="t r" style="left:1846px;top:302px;color:#b794f6;"><span style="border-bottom:2px solid #e6e668;display:inline-block;height:14px;line-height:14px;position:relative;top:-1px;padding-top:1px">AF</span></div>
<div class="t r" style="left:1870px;top:302px;color:#e0e0e0;">0</div>
<div class="t r" style="left:1750px;top:316px;color:#b794f6;"><span style="border-bottom:2px solid #e6e668;display:inline-block;height:14px;line-height:14px;position:relative;top:-1px;padding-top:1px">OF</span></div>
<div class="t r" style="left:1774px;top:316px;color:#e0e0e0;">0</div>
<div class="t r" style="left:1798px;top:316px;color:#b794f6;"><span style="border-bottom:2px solid #e6e668;display:inline-block;height:14px;line-height:14px;position:relative;top:-1px;padding-top:1px">SF</span></div>
<div class="t r" style="left:1822px;top:316px;color:#e0e0e0;">0</div>
<div class="t r" style="left:1846px;top:316px;color:#b794f6;">DF</div>
<div class="t r" style="left:1870px;top:316px;color:#e0e0e0;">0</div>
<div class="t r" style="left:1750px;top:330px;color:#b794f6;"><span style="border-bottom:2px solid #e6e668;display:inline-block;height:14px;line-height:14px;position:relative;top:-1px;padding-top:1px">CF</span></div>
<div class="t r" style="left:1774px;top:330px;color:#e0e0e0;">0</div>
<div class="t r" style="left:1798px;top:330px;color:#b794f6;">TF</div>
<div class="t r" style="left:1822px;top:330px;color:#e0e0e0;">0</div>
<div class="t r" style="left:1846px;top:330px;color:#b794f6;">IF</div>
<div class="t r" style="left:1870px;top:330px;color:#e0e0e0;">1</div>
<div class="t r" style="left:1750px;top:358px;color:#b794f6;">LastError</div>
<div class="t r" style="left:1838px;top:358px;color:#e0e0e0;">00000000 (ERROR_SUCCESS)</div>
<div class="t r" style="left:1750px;top:372px;color:#b794f6;">LastStatus</div>
<div class="t r" style="left:1838px;top:372px;color:#e0e0e0;">C0000034 (STATUS_OBJECT_NAME_NOT_FOUND)</div>
<div class="t r" style="left:1750px;top:400px;color:#b794f6;">GS</div>
<div class="t r" style="left:1774px;top:400px;color:#e0e0e0;">002B</div>
<div class="t r" style="left:1822px;top:400px;color:#b794f6;">FS</div>
<div class="t r" style="left:1846px;top:400px;color:#e0e0e0;">0053</div>
<div class="t r" style="left:1750px;top:414px;color:#b794f6;">ES</div>
<div class="t r" style="left:1774px;top:414px;color:#e0e0e0;">002B</div>
<div class="t r" style="left:1822px;top:414px;color:#b794f6;">DS</div>
<div class="t r" style="left:1846px;top:414px;color:#e0e0e0;">002B</div>
<div class="t r" style="left:1750px;top:428px;color:#b794f6;">CS</div>
<div class="t r" style="left:1774px;top:428px;color:#e0e0e0;">0023</div>
<div class="t r" style="left:1822px;top:428px;color:#b794f6;">SS</div>
<div class="t r" style="left:1846px;top:428px;color:#e0e0e0;">002B</div>
<div class="t r" style="left:1750px;top:456px;color:#b794f6;">ST(0)</div>
<div class="t r" style="left:1798px;top:456px;color:#e0e0e0;">00000000000000000000</div>
<div class="t r" style="left:1966px;top:456px;color:#f0506e;">x87r0 <span class="k" style="width:13px">空</span> 0.000000000000000000</div>
<div class="t r" style="left:1750px;top:470px;color:#b794f6;">ST(1)</div>
<div class="t r" style="left:1798px;top:470px;color:#e0e0e0;">00000000000000000000</div>
<div class="t r" style="left:1966px;top:470px;color:#f0506e;">x87r1 <span class="k" style="width:13px">空</span> 0.000000000000000000</div>
<div class="t r" style="left:1750px;top:484px;color:#b794f6;">ST(2)</div>
<div class="t r" style="left:1798px;top:484px;color:#e0e0e0;">00000000000000000000</div>
<div class="t r" style="left:1966px;top:484px;color:#f0506e;">x87r2 <span class="k" style="width:13px">空</span> 0.000000000000000000</div>
<div class="t r" style="left:1750px;top:498px;color:#b794f6;">ST(3)</div>
<div class="t r" style="left:1798px;top:498px;color:#e0e0e0;">00000000000000000000</div>
<div class="t r" style="left:1966px;top:498px;color:#f0506e;">x87r3 <span class="k" style="width:13px">空</span> 0.000000000000000000</div>
<div class="t r" style="left:1750px;top:512px;color:#b794f6;">ST(4)</div>
<div class="t r" style="left:1798px;top:512px;color:#e0e0e0;">3FFF8000000000000000</div>
<div class="t r" style="left:1966px;top:512px;color:#f0506e;">x87r4 <span class="k" style="width:13px">空</span> 1.000000000000000000</div>
<div class="t r" style="left:1750px;top:526px;color:#b794f6;">ST(5)</div>
<div class="t r" style="left:1798px;top:526px;color:#e0e0e0;">3FFE8000000000000000</div>
<div class="t r" style="left:1966px;top:526px;color:#f0506e;">x87r5 <span class="k" style="width:13px">空</span> 0.5000000000000000000</div>
<div class="t r" style="left:1750px;top:540px;color:#b794f6;">ST(6)</div>
<div class="t r" style="left:1798px;top:540px;color:#e0e0e0;">3FFF8000000000000000</div>
<div class="t r" style="left:1966px;top:540px;color:#f0506e;">x87r6 <span class="k" style="width:13px">空</span> 1.000000000000000000</div>
<div class="t r" style="left:1750px;top:554px;color:#b794f6;">ST(7)</div>
<div class="t r" style="left:1798px;top:554px;color:#e0e0e0;">00000000000000000000</div>
<div class="t r" style="left:1966px;top:554px;color:#f0506e;">x87r7 <span class="k" style="width:13px">空</span> 0.000000000000000000</div>
<svg class="i" style="left:1746px;top:144px" width="188" height="18"><rect x="1.750" y="1.750" width="184.500" height="14.500" fill="none" stroke="#d83030" stroke-width="1.500"/></svg>
<svg class="i" style="left:2545px;top:132px" width="10" height="8"><path d="M1 8L5 .5L9 8z" fill="#a8a8a8"/></svg>
<svg class="i" style="left:2545px;top:563px" width="10" height="8"><path d="M1 0L5 7.500L9 0z" fill="#a8a8a8"/></svg>
<div style="position:absolute;left:2545px;top:144px;width:10px;height:415px;background:#424242;border-radius:5px"></div>
<div style="position:absolute;left:2545px;top:144px;width:10px;height:160px;background:#757575;border-radius:5px"></div>
<svg class="i" style="left:1746px;top:579px" width="8" height="10"><path d="M8 1L.5 5L8 9z" fill="#a8a8a8"/></svg>
<svg class="i" style="left:2529px;top:579px" width="8" height="10"><path d="M0 1L7.500 5L0 9z" fill="#a8a8a8"/></svg>
<div style="position:absolute;left:1758px;top:579px;width:767px;height:10px;background:#424242;border-radius:5px"></div>
<div style="position:absolute;left:1758px;top:579px;width:613px;height:10px;background:#757575;border-radius:5px"></div>
<div style="position:absolute;left:1742px;top:593px;width:818px;height:1px;background:#555555;"></div>
<div class="t u" style="left:1746px;top:603px;color:#e6e6e6;"><span class="k" style="width:24px">默认</span><span class="ua"> (stdcall)</span></div>
<svg class="i" style="left:2374px;top:606px" width="7" height="5"><path d="M0 0L3.500 4.500L7 0z" fill="#a0a0a0"/></svg>
<div style="position:absolute;left:2389px;top:595px;width:101px;height:26px;background:#333333;border-radius:2px"></div>
<svg class="i" style="left:2394px;top:605px" width="7" height="5"><path d="M0 0L3.500 4.500L7 0z" fill="#a0a0a0"/></svg>
<svg class="i" style="left:2479px;top:605px" width="7" height="5"><path d="M0 4.500L3.500 0L7 4.500z" fill="#a0a0a0"/></svg>
<div class="t s" style="left:2411px;top:602px;color:#e6e6e6;line-height:12px;font-size:12px">5</div>
<div style="position:absolute;left:2494px;top:599px;width:16px;height:16px;border:1px solid #6e6e6e;border-radius:3px;background:#262626"></div>
<div class="t u" style="left:2516px;top:602px;color:#e6e6e6;"><span class="k" style="width:24px">解锁</span></div>
<div style="position:absolute;left:1743px;top:649px;width:798px;height:13px;background:#414141;"></div>
<div class="t m" style="left:1746px;top:623px;color:#e0e0e0;">1: [esp+4] 00401232 &quot;Ph~!@&quot;</div>
<div class="t m" style="left:1746px;top:636px;color:#e0e0e0;">2: [esp+8] 0040218E &quot;JUNK&quot;</div>
<div class="t m" style="left:1746px;top:649px;color:#e0e0e0;">3: [esp+C] 00401128 &lt;crackme.WndProc&gt;</div>
<div class="t m" style="left:1746px;top:662px;color:#e0e0e0;">4: [esp+10] 00000111</div>
<div class="t m" style="left:1746px;top:675px;color:#e0e0e0;">5: [esp+14] 00000000</div>
<svg class="i" style="left:2545px;top:627px" width="10" height="8"><path d="M1 8L5 .5L9 8z" fill="#a8a8a8"/></svg>
<svg class="i" style="left:2545px;top:704px" width="10" height="8"><path d="M1 0L5 7.500L9 0z" fill="#a8a8a8"/></svg>
<div style="position:absolute;left:2545px;top:639px;width:10px;height:61px;background:#424242;border-radius:5px"></div>
<div style="position:absolute;left:2545px;top:639px;width:10px;height:62px;background:#757575;border-radius:5px"></div>
<div style="position:absolute;left:2px;top:720px;width:88px;height:26px;background:#424242;border-radius:3px 3px 0 0;border-bottom:2px solid #9db1e6"></div>
<svg class="i" style="left:12px;top:724px" width="16" height="16" viewBox="0 0 16 16"><g stroke="#5c2c0a" stroke-width="1" fill="#b8702c"><path d="M7.500 7C6 7 4.800 7.200 3.600 7.600C2.400 8 1.700 8.800 2 9.700C2.300 10.500 3.500 10.600 5 10.200C5 11.400 4.500 12.300 3.500 13.200C2.600 14 1.800 14.600 2.200 15.400C2.600 16.200 4 16.200 4.900 15.600C6 14.900 6.800 14 7.500 13.200C8.200 14 9 14.900 10.100 15.600C11 16.200 12.400 16.200 12.800 15.400C13.200 14.600 12.400 14 11.500 13.200C10.500 12.300 10 11.400 10 10.200C11.500 10.600 12.700 10.500 13 9.700C13.300 8.800 12.600 8 11.400 7.600C10.200 7.200 9 7 7.500 7Z"/><circle cx="7.500" cy="4.500" r="3.300"/></g><circle cx="6.500" cy="3.900" r=".6" fill="#fff4c0"/><circle cx="8.500" cy="3.900" r=".6" fill="#fff4c0"/><path d="M6 5.500q1.500 1.200 3 0" stroke="#f8d8b0" stroke-width=".7" fill="none"/><circle cx="7.500" cy="8.600" r=".7" fill="#fff4e0"/><circle cx="7.500" cy="10.400" r=".7" fill="#fff4e0"/><circle cx="7.500" cy="12.100" r=".65" fill="#fff4e0"/><ellipse cx="2.700" cy="9" rx=".7" ry="1.100" fill="#fff0d8"/><ellipse cx="12.300" cy="9" rx=".7" ry="1.100" fill="#fff0d8"/><ellipse cx="3.500" cy="14.900" rx="1.500" ry=".8" transform="rotate(-30 3.500 14.900)" fill="#f8d0d0"/><ellipse cx="11.500" cy="14.900" rx="1.500" ry=".8" transform="rotate(30 11.500 14.900)" fill="#f8d0d0"/></svg>
<div class="t u" style="left:38px;top:728px;color:#9aa6f0;"><span class="k" style="width:24px">内存</span><span class="ua"> 1</span></div>
<div style="position:absolute;left:92px;top:720px;width:88px;height:25px;background:#2f2f2f;border-radius:3px 3px 0 0"></div>
<svg class="i" style="left:102px;top:724px" width="16" height="16" viewBox="0 0 16 16"><g stroke="#5c2c0a" stroke-width="1" fill="#b8702c"><path d="M7.500 7C6 7 4.800 7.200 3.600 7.600C2.400 8 1.700 8.800 2 9.700C2.300 10.500 3.500 10.600 5 10.200C5 11.400 4.500 12.300 3.500 13.200C2.600 14 1.800 14.600 2.200 15.400C2.600 16.200 4 16.200 4.900 15.600C6 14.900 6.800 14 7.500 13.200C8.200 14 9 14.900 10.100 15.600C11 16.200 12.400 16.200 12.800 15.400C13.200 14.600 12.400 14 11.500 13.200C10.500 12.300 10 11.400 10 10.200C11.500 10.600 12.700 10.500 13 9.700C13.300 8.800 12.600 8 11.400 7.600C10.200 7.200 9 7 7.500 7Z"/><circle cx="7.500" cy="4.500" r="3.300"/></g><circle cx="6.500" cy="3.900" r=".6" fill="#fff4c0"/><circle cx="8.500" cy="3.900" r=".6" fill="#fff4c0"/><path d="M6 5.500q1.500 1.200 3 0" stroke="#f8d8b0" stroke-width=".7" fill="none"/><circle cx="7.500" cy="8.600" r=".7" fill="#fff4e0"/><circle cx="7.500" cy="10.400" r=".7" fill="#fff4e0"/><circle cx="7.500" cy="12.100" r=".65" fill="#fff4e0"/><ellipse cx="2.700" cy="9" rx=".7" ry="1.100" fill="#fff0d8"/><ellipse cx="12.300" cy="9" rx=".7" ry="1.100" fill="#fff0d8"/><ellipse cx="3.500" cy="14.900" rx="1.500" ry=".8" transform="rotate(-30 3.500 14.900)" fill="#f8d0d0"/><ellipse cx="11.500" cy="14.900" rx="1.500" ry=".8" transform="rotate(30 11.500 14.900)" fill="#f8d0d0"/></svg>
<div class="t u" style="left:128px;top:728px;color:#e6e6e6;"><span class="k" style="width:24px">内存</span><span class="ua"> 2</span></div>
<div style="position:absolute;left:182px;top:720px;width:88px;height:25px;background:#2f2f2f;border-radius:3px 3px 0 0"></div>
<svg class="i" style="left:192px;top:724px" width="16" height="16" viewBox="0 0 16 16"><g stroke="#5c2c0a" stroke-width="1" fill="#b8702c"><path d="M7.500 7C6 7 4.800 7.200 3.600 7.600C2.400 8 1.700 8.800 2 9.700C2.300 10.500 3.500 10.600 5 10.200C5 11.400 4.500 12.300 3.500 13.200C2.600 14 1.800 14.600 2.200 15.400C2.600 16.200 4 16.200 4.900 15.600C6 14.900 6.800 14 7.500 13.200C8.200 14 9 14.900 10.100 15.600C11 16.200 12.400 16.200 12.800 15.400C13.200 14.600 12.400 14 11.500 13.200C10.500 12.300 10 11.400 10 10.200C11.500 10.600 12.700 10.500 13 9.700C13.300 8.800 12.600 8 11.400 7.600C10.200 7.200 9 7 7.500 7Z"/><circle cx="7.500" cy="4.500" r="3.300"/></g><circle cx="6.500" cy="3.900" r=".6" fill="#fff4c0"/><circle cx="8.500" cy="3.900" r=".6" fill="#fff4c0"/><path d="M6 5.500q1.500 1.200 3 0" stroke="#f8d8b0" stroke-width=".7" fill="none"/><circle cx="7.500" cy="8.600" r=".7" fill="#fff4e0"/><circle cx="7.500" cy="10.400" r=".7" fill="#fff4e0"/><circle cx="7.500" cy="12.100" r=".65" fill="#fff4e0"/><ellipse cx="2.700" cy="9" rx=".7" ry="1.100" fill="#fff0d8"/><ellipse cx="12.300" cy="9" rx=".7" ry="1.100" fill="#fff0d8"/><ellipse cx="3.500" cy="14.900" rx="1.500" ry=".8" transform="rotate(-30 3.500 14.900)" fill="#f8d0d0"/><ellipse cx="11.500" cy="14.900" rx="1.500" ry=".8" transform="rotate(30 11.500 14.900)" fill="#f8d0d0"/></svg>
<div class="t u" style="left:218px;top:728px;color:#e6e6e6;"><span class="k" style="width:24px">内存</span><span class="ua"> 3</span></div>
<div style="position:absolute;left:272px;top:720px;width:88px;height:25px;background:#2f2f2f;border-radius:3px 3px 0 0"></div>
<svg class="i" style="left:282px;top:724px" width="16" height="16" viewBox="0 0 16 16"><g stroke="#5c2c0a" stroke-width="1" fill="#b8702c"><path d="M7.500 7C6 7 4.800 7.200 3.600 7.600C2.400 8 1.700 8.800 2 9.700C2.300 10.500 3.500 10.600 5 10.200C5 11.400 4.500 12.300 3.500 13.200C2.600 14 1.800 14.600 2.200 15.400C2.600 16.200 4 16.200 4.900 15.600C6 14.900 6.800 14 7.500 13.200C8.200 14 9 14.900 10.100 15.600C11 16.200 12.400 16.200 12.800 15.400C13.200 14.600 12.400 14 11.500 13.200C10.500 12.300 10 11.400 10 10.200C11.500 10.600 12.700 10.500 13 9.700C13.300 8.800 12.600 8 11.400 7.600C10.200 7.200 9 7 7.500 7Z"/><circle cx="7.500" cy="4.500" r="3.300"/></g><circle cx="6.500" cy="3.900" r=".6" fill="#fff4c0"/><circle cx="8.500" cy="3.900" r=".6" fill="#fff4c0"/><path d="M6 5.500q1.500 1.200 3 0" stroke="#f8d8b0" stroke-width=".7" fill="none"/><circle cx="7.500" cy="8.600" r=".7" fill="#fff4e0"/><circle cx="7.500" cy="10.400" r=".7" fill="#fff4e0"/><circle cx="7.500" cy="12.100" r=".65" fill="#fff4e0"/><ellipse cx="2.700" cy="9" rx=".7" ry="1.100" fill="#fff0d8"/><ellipse cx="12.300" cy="9" rx=".7" ry="1.100" fill="#fff0d8"/><ellipse cx="3.500" cy="14.900" rx="1.500" ry=".8" transform="rotate(-30 3.500 14.900)" fill="#f8d0d0"/><ellipse cx="11.500" cy="14.900" rx="1.500" ry=".8" transform="rotate(30 11.500 14.900)" fill="#f8d0d0"/></svg>
<div class="t u" style="left:308px;top:728px;color:#e6e6e6;"><span class="k" style="width:24px">内存</span><span class="ua"> 4</span></div>
<div style="position:absolute;left:362px;top:720px;width:88px;height:25px;background:#2f2f2f;border-radius:3px 3px 0 0"></div>
<svg class="i" style="left:372px;top:724px" width="16" height="16" viewBox="0 0 16 16"><g stroke="#5c2c0a" stroke-width="1" fill="#b8702c"><path d="M7.500 7C6 7 4.800 7.200 3.600 7.600C2.400 8 1.700 8.800 2 9.700C2.300 10.500 3.500 10.600 5 10.200C5 11.400 4.500 12.300 3.500 13.200C2.600 14 1.800 14.600 2.200 15.400C2.600 16.200 4 16.200 4.900 15.600C6 14.900 6.800 14 7.500 13.200C8.200 14 9 14.900 10.100 15.600C11 16.200 12.400 16.200 12.800 15.400C13.200 14.600 12.400 14 11.500 13.200C10.500 12.300 10 11.400 10 10.200C11.500 10.600 12.700 10.500 13 9.700C13.300 8.800 12.600 8 11.400 7.600C10.200 7.200 9 7 7.500 7Z"/><circle cx="7.500" cy="4.500" r="3.300"/></g><circle cx="6.500" cy="3.900" r=".6" fill="#fff4c0"/><circle cx="8.500" cy="3.900" r=".6" fill="#fff4c0"/><path d="M6 5.500q1.500 1.200 3 0" stroke="#f8d8b0" stroke-width=".7" fill="none"/><circle cx="7.500" cy="8.600" r=".7" fill="#fff4e0"/><circle cx="7.500" cy="10.400" r=".7" fill="#fff4e0"/><circle cx="7.500" cy="12.100" r=".65" fill="#fff4e0"/><ellipse cx="2.700" cy="9" rx=".7" ry="1.100" fill="#fff0d8"/><ellipse cx="12.300" cy="9" rx=".7" ry="1.100" fill="#fff0d8"/><ellipse cx="3.500" cy="14.900" rx="1.500" ry=".8" transform="rotate(-30 3.500 14.900)" fill="#f8d0d0"/><ellipse cx="11.500" cy="14.900" rx="1.500" ry=".8" transform="rotate(30 11.500 14.900)" fill="#f8d0d0"/></svg>
<div class="t u" style="left:398px;top:728px;color:#e6e6e6;"><span class="k" style="width:24px">内存</span><span class="ua"> 5</span></div>
<div style="position:absolute;left:452px;top:720px;width:88px;height:25px;background:#2f2f2f;border-radius:3px 3px 0 0"></div>
<svg class="i" style="left:462px;top:724px" width="16" height="16" viewBox="0 0 16 16"><path d="M.8 7.500c1.500-1.800 3.500-2.200 6-1.200c-.3 2.500-2 4-4.500 3.800c-.5-1-.8-1.800-1.500-2.600z" fill="#3f9a3a" stroke="#1f6a22" stroke-width=".5"/><path d="M2.500 14.500c-.5-2.500 .5-4.500 3.500-5.500c1.800 1.800 1.800 4 .3 5.800c-1.300-.5-2.500-.6-3.800-.3z" fill="#48b044" stroke="#1f6a22" stroke-width=".5"/><path d="M8 9.500c2-1.500 4.500-1.500 6.500 .5c-.8 2.500-3 3.800-5.500 3c-.2-1.300-.5-2.300-1-3.500z" fill="#3f9a3a" stroke="#1f6a22" stroke-width=".5"/><circle cx="7" cy="6.800" r="2.300" fill="#e02a2a"/><circle cx="9.800" cy="4.500" r="1.900" fill="#f04848"/><circle cx="6.300" cy="3" r="1.500" fill="#d82020"/><circle cx="6.500" cy="6.200" r=".7" fill="#ffb0a0"/></svg>
<div class="t u" style="left:488px;top:728px;color:#e6e6e6;"><span class="k" style="width:24px">监视</span><span class="ua"> 1</span></div>
<div style="position:absolute;left:542px;top:720px;width:100px;height:25px;background:#2f2f2f;border-radius:3px 3px 0 0"></div>
<svg class="i" style="left:552px;top:724px" width="16" height="16" viewBox="0 0 16 16"><g stroke="#5c2c0a" stroke-width="1" fill="#b8702c"><path d="M7.500 7C6 7 4.800 7.200 3.600 7.600C2.400 8 1.700 8.800 2 9.700C2.300 10.500 3.500 10.600 5 10.200C5 11.400 4.500 12.300 3.500 13.200C2.600 14 1.800 14.600 2.200 15.400C2.600 16.200 4 16.200 4.900 15.600C6 14.900 6.800 14 7.500 13.200C8.200 14 9 14.900 10.100 15.600C11 16.200 12.400 16.200 12.800 15.400C13.200 14.600 12.400 14 11.500 13.200C10.500 12.300 10 11.400 10 10.200C11.500 10.600 12.700 10.500 13 9.700C13.300 8.800 12.600 8 11.400 7.600C10.200 7.200 9 7 7.500 7Z"/><circle cx="7.500" cy="4.500" r="3.300"/></g><circle cx="6.500" cy="3.900" r=".6" fill="#fff4c0"/><circle cx="8.500" cy="3.900" r=".6" fill="#fff4c0"/><path d="M6 5.500q1.500 1.200 3 0" stroke="#f8d8b0" stroke-width=".7" fill="none"/><circle cx="7.500" cy="8.600" r=".7" fill="#fff4e0"/><circle cx="7.500" cy="10.400" r=".7" fill="#fff4e0"/><circle cx="7.500" cy="12.100" r=".65" fill="#fff4e0"/><ellipse cx="2.700" cy="9" rx=".7" ry="1.100" fill="#fff0d8"/><ellipse cx="12.300" cy="9" rx=".7" ry="1.100" fill="#fff0d8"/><ellipse cx="3.500" cy="14.900" rx="1.500" ry=".8" transform="rotate(-30 3.500 14.900)" fill="#f8d0d0"/><ellipse cx="11.500" cy="14.900" rx="1.500" ry=".8" transform="rotate(30 11.500 14.900)" fill="#f8d0d0"/></svg>
<div class="t u" style="left:578px;top:728px;color:#e6e6e6;"><span class="k" style="width:48px">局部变量</span></div>
<div style="position:absolute;left:644px;top:720px;width:88px;height:25px;background:#2f2f2f;border-radius:3px 3px 0 0"></div>
<svg class="i" style="left:654px;top:724px" width="16" height="16" viewBox="0 0 16 16"><path d="M3 15L9.800 6.500c1.500-2 .5-4.200-1.500-4.200c-1.700 0-3 1-3.800 2.300" fill="none" stroke="#f4f0f0" stroke-width="2" stroke-linecap="round"/><path d="M3 15L9.800 6.500c1.500-2 .5-4.200-1.500-4.200c-1.700 0-3 1-3.800 2.300" fill="none" stroke="#e02838" stroke-width="2" stroke-linecap="butt" stroke-dasharray="1.800 1.800"/></svg>
<div class="t u" style="left:680px;top:728px;color:#e6e6e6;"><span class="k" style="width:36px">结构体</span></div>
<div class="t u" style="left:8px;top:751px;color:#e6e6e6;"><span class="k" style="width:24px">地址</span></div>
<div class="t u" style="left:80px;top:751px;color:#e6e6e6;"><span class="k" style="width:48px">十六进制</span></div>
<div class="t m" style="left:463px;top:750px;color:#e6e6e6;">ASCII</div>
<div style="position:absolute;left:74px;top:748px;width:1px;height:16px;background:#363636;"></div>
<div style="position:absolute;left:459px;top:748px;width:1px;height:16px;background:#363636;"></div>
<div style="position:absolute;left:595px;top:748px;width:1px;height:16px;background:#363636;"></div>
<div style="position:absolute;left:0px;top:748px;width:1529px;height:1px;background:#303030;"></div>
<div style="position:absolute;left:0px;top:764px;width:1529px;height:1px;background:#303030;"></div>
<div style="position:absolute;left:1528px;top:748px;width:1px;height:17px;background:#303030;"></div>
<div style="position:absolute;left:99px;top:778px;width:24px;height:13px;background:#414141;"></div>
<div style="position:absolute;left:471px;top:778px;width:8px;height:13px;background:#414141;"></div>
<div style="position:absolute;left:74px;top:765px;width:1px;height:220px;background:#6a6a6a;"></div>
<div style="position:absolute;left:171px;top:765px;width:1px;height:220px;background:#6a6a6a;"></div>
<div style="position:absolute;left:267px;top:765px;width:1px;height:220px;background:#6a6a6a;"></div>
<div style="position:absolute;left:363px;top:765px;width:1px;height:220px;background:#6a6a6a;"></div>
<div style="position:absolute;left:458px;top:765px;width:1px;height:220px;background:#6a6a6a;"></div>
<div style="position:absolute;left:594px;top:765px;width:1px;height:220px;background:#6a6a6a;"></div>
<div class="t m" style="left:7px;top:765px;color:#a0a0a0;">0040217E</div>
<div class="t m" style="left:79px;top:765px;color:#e0e0e0;">31 32 33 34 35 36 00 00 00 00 00 00 00 00 00 00</div>
<div class="t m" style="left:463px;top:765px;color:#e0e0e0;">123456..........</div>
<div class="t m" style="left:7px;top:778px;color:#a0a0a0;">0040218E</div>
<div class="t m" style="left:79px;top:778px;color:#e0e0e0;">4A 55 4E 4B 00 00 00 00 00 00 00 00 00 00 00 00</div>
<div class="t m" style="left:463px;top:778px;color:#e0e0e0;">JUNK............</div>
<div class="t m" style="left:7px;top:791px;color:#a0a0a0;">0040219E</div>
<div class="t m" style="left:79px;top:791px;color:#e0e0e0;">00 00 00 00 00 00 00 00 00 00 00 00 00 00 00 00</div>
<div class="t m" style="left:463px;top:791px;color:#e0e0e0;">................</div>
<div class="t m" style="left:7px;top:804px;color:#a0a0a0;">004021AE</div>
<div class="t m" style="left:79px;top:804px;color:#e0e0e0;">00 00 00 00 00 00 00 00 00 00 00 00 00 00 00 00</div>
<div class="t m" style="left:463px;top:804px;color:#e0e0e0;">................</div>
<div class="t m" style="left:7px;top:817px;color:#a0a0a0;">004021BE</div>
<div class="t m" style="left:79px;top:817px;color:#e0e0e0;">00 00 00 00 00 00 00 00 00 00 00 00 00 00 00 00</div>
<div class="t m" style="left:463px;top:817px;color:#e0e0e0;">................</div>
<div class="t m" style="left:7px;top:830px;color:#a0a0a0;">004021CE</div>
<div class="t m" style="left:79px;top:830px;color:#e0e0e0;">00 00 00 00 00 00 00 00 00 00 00 00 00 00 00 00</div>
<div class="t m" style="left:463px;top:830px;color:#e0e0e0;">................</div>
<div class="t m" style="left:7px;top:843px;color:#a0a0a0;">004021DE</div>
<div class="t m" style="left:79px;top:843px;color:#e0e0e0;">00 00 00 00 00 00 00 00 00 00 00 00 00 00 00 00</div>
<div class="t m" style="left:463px;top:843px;color:#e0e0e0;">................</div>
<div class="t m" style="left:7px;top:856px;color:#a0a0a0;">004021EE</div>
<div class="t m" style="left:79px;top:856px;color:#e0e0e0;">00 00 00 00 00 00 00 00 00 00 00 00 00 00 00 00</div>
<div class="t m" style="left:463px;top:856px;color:#e0e0e0;">................</div>
<div class="t m" style="left:7px;top:869px;color:#a0a0a0;">004021FE</div>
<div class="t m" style="left:79px;top:869px;color:#e0e0e0;">00 00 00 00 00 00 00 00 00 00 00 00 00 00 00 00</div>
<div class="t m" style="left:463px;top:869px;color:#e0e0e0;">................</div>
<div class="t m" style="left:7px;top:882px;color:#a0a0a0;">0040220E</div>
<div class="t m" style="left:79px;top:882px;color:#e0e0e0;">00 00 00 00 00 00 00 00 00 00 00 00 00 00 00 00</div>
<div class="t m" style="left:463px;top:882px;color:#e0e0e0;">................</div>
<div class="t m" style="left:7px;top:895px;color:#a0a0a0;">0040221E</div>
<div class="t m" style="left:79px;top:895px;color:#e0e0e0;">00 00 00 00 00 00 00 00 00 00 00 00 00 00 00 00</div>
<div class="t m" style="left:463px;top:895px;color:#e0e0e0;">................</div>
<div class="t m" style="left:7px;top:908px;color:#a0a0a0;">0040222E</div>
<div class="t m" style="left:79px;top:908px;color:#e0e0e0;">00 00 00 00 00 00 00 00 00 00 00 00 00 00 00 00</div>
<div class="t m" style="left:463px;top:908px;color:#e0e0e0;">................</div>
<div class="t m" style="left:7px;top:921px;color:#a0a0a0;">0040223E</div>
<div class="t m" style="left:79px;top:921px;color:#e0e0e0;">00 00 00 00 00 00 00 00 00 00 00 00 00 00 00 00</div>
<div class="t m" style="left:463px;top:921px;color:#e0e0e0;">................</div>
<div class="t m" style="left:7px;top:934px;color:#a0a0a0;">0040224E</div>
<div class="t m" style="left:79px;top:934px;color:#e0e0e0;">00 00 00 00 00 00 00 00 00 00 00 00 00 00 00 00</div>
<div class="t m" style="left:463px;top:934px;color:#e0e0e0;">................</div>
<div class="t m" style="left:7px;top:947px;color:#a0a0a0;">0040225E</div>
<div class="t m" style="left:79px;top:947px;color:#e0e0e0;">00 00 00 00 00 00 00 00 00 00 00 00 00 00 00 00</div>
<div class="t m" style="left:463px;top:947px;color:#e0e0e0;">................</div>
<div class="t m" style="left:7px;top:960px;color:#a0a0a0;">0040226E</div>
<div class="t m" style="left:79px;top:960px;color:#e0e0e0;">00 00 00 00 00 00 00 00 00 00 00 00 00 00 00 00</div>
<div class="t m" style="left:463px;top:960px;color:#e0e0e0;">................</div>
<div class="t m" style="left:7px;top:973px;color:#a0a0a0;">0040227E</div>
<div class="t m" style="left:79px;top:973px;color:#e0e0e0;">00 00 00 00 00 00 00 00 00 00 00 00 00 00 00 00</div>
<div class="t m" style="left:463px;top:973px;color:#e0e0e0;">................</div>
<div style="position:absolute;left:1528px;top:765px;width:1px;height:220px;background:#6a6a6a;"></div>
<svg class="i" style="left:1533px;top:753px" width="10" height="8"><path d="M1 8L5 .5L9 8z" fill="#a8a8a8"/></svg>
<svg class="i" style="left:1533px;top:972px" width="10" height="8"><path d="M1 0L5 7.500L9 0z" fill="#a8a8a8"/></svg>
<div style="position:absolute;left:1533px;top:765px;width:10px;height:203px;background:#424242;border-radius:5px"></div>
<div style="position:absolute;left:1533px;top:775px;width:10px;height:98px;background:#757575;border-radius:5px"></div>
<div style="position:absolute;left:1549px;top:719px;width:1px;height:268px;background:#555555;"></div>
<div style="position:absolute;left:1551px;top:720px;width:990px;height:13px;background:#414141;"></div>
<div style="position:absolute;left:1622px;top:720px;width:1px;height:247px;background:#6a6a6a;"></div>
<div style="position:absolute;left:1696px;top:720px;width:1px;height:247px;background:#6a6a6a;"></div>
<div class="t m" style="left:1555px;top:720px;color:#9bf055;">0019FDC4</div>
<div class="t m" style="left:1627px;top:720px;color:#e0e0e0;">004013A2</div>
<div class="t m" style="left:1702px;top:720px;color:#f0506e;"><span class="k" style="width:39px">返回到</span> crackme.sub_40137E+24 <span class="k" style="width:13px">自</span> crackme.sub_4013C2</div>
<div class="t m" style="left:1555px;top:733px;color:#a0a0a0;">0019FDC8</div>
<div class="t m" style="left:1627px;top:733px;color:#e0e0e0;">00401232</div>
<div class="t m" style="left:1702px;top:733px;color:#f0506e;"><span class="k" style="width:39px">返回到</span> crackme.sub_401128+10A <span class="k" style="width:13px">自</span> crackme.sub_40137E</div>
<div class="t m" style="left:1555px;top:746px;color:#a0a0a0;">0019FDCC</div>
<div class="t m" style="left:1627px;top:746px;color:#e0e0e0;">0040218E</div>
<div class="t m" style="left:1702px;top:746px;color:#e0e0e0;">&quot;JUNK&quot;</div>
<div class="t m" style="left:1555px;top:759px;color:#b794f6;">0019FDD0</div>
<div class="t m" style="left:1627px;top:759px;color:#e0e0e0;">00401128</div>
<div class="t m" style="left:1702px;top:759px;color:#f0506e;"><span class="k" style="width:39px">返回到</span> crackme.sub_401128 <span class="k" style="width:13px">自</span> crackme.00401512</div>
<div class="t m" style="left:1555px;top:772px;color:#a0a0a0;">0019FDD4</div>
<div class="t m" style="left:1627px;top:772px;color:#e0e0e0;">00000111</div>
<div class="t m" style="left:1555px;top:785px;color:#a0a0a0;">0019FDD8</div>
<div class="t m" style="left:1627px;top:785px;color:#e0e0e0;">00000000</div>
<div class="t m" style="left:1555px;top:798px;color:#a0a0a0;">0019FDDC</div>
<div class="t m" style="left:1627px;top:798px;color:#e0e0e0;">0019FE08</div>
<div class="t m" style="left:1555px;top:811px;color:#a0a0a0;">0019FDE0</div>
<div class="t m" style="left:1630px;top:811px;color:#e0e0e0;">76E947AB</div>
<div class="t m" style="left:1702px;top:811px;color:#f0506e;"><span class="k" style="width:39px">返回到</span> user32.sub_76E94780+2B <span class="k" style="width:13px">自</span> ???</div>
<div class="t m" style="left:1555px;top:824px;color:#a0a0a0;">0019FDE4</div>
<div class="t m" style="left:1630px;top:824px;color:#e0e0e0;">001507DC</div>
<div class="t m" style="left:1555px;top:837px;color:#a0a0a0;">0019FDE8</div>
<div class="t m" style="left:1630px;top:837px;color:#e0e0e0;">00000111</div>
<div class="t m" style="left:1555px;top:850px;color:#a0a0a0;">0019FDEC</div>
<div class="t m" style="left:1630px;top:850px;color:#e0e0e0;">00000066</div>
<div class="t m" style="left:1555px;top:863px;color:#a0a0a0;">0019FDF0</div>
<div class="t m" style="left:1630px;top:863px;color:#e0e0e0;">00000000</div>
<div class="t m" style="left:1555px;top:876px;color:#a0a0a0;">0019FDF4</div>
<div class="t m" style="left:1630px;top:876px;color:#e0e0e0;">00000000</div>
<div class="t m" style="left:1555px;top:889px;color:#a0a0a0;">0019FDF8</div>
<div class="t m" style="left:1630px;top:889px;color:#e0e0e0;">DCBAABCD</div>
<div class="t m" style="left:1555px;top:902px;color:#b794f6;">0019FDFC</div>
<div class="t m" style="left:1630px;top:902px;color:#e0e0e0;">00401128</div>
<div class="t m" style="left:1702px;top:902px;color:#f0506e;"><span class="k" style="width:39px">返回到</span> crackme.sub_401128 <span class="k" style="width:13px">自</span> crackme.00401512</div>
<div class="t m" style="left:1555px;top:915px;color:#a0a0a0;">0019FE00</div>
<div class="t m" style="left:1630px;top:915px;color:#e0e0e0;">00000111</div>
<div class="t m" style="left:1555px;top:928px;color:#a0a0a0;">0019FE04</div>
<div class="t m" style="left:1630px;top:928px;color:#e0e0e0;">00000000</div>
<div class="t m" style="left:1555px;top:941px;color:#a0a0a0;">0019FE08</div>
<div class="t m" style="left:1630px;top:941px;color:#e0e0e0;">0019FEEC</div>
<div class="t m" style="left:1555px;top:954px;color:#a0a0a0;">0019FE0C</div>
<div class="t m" style="left:1630px;top:954px;color:#e0e0e0;">76E752AC</div>
<div class="t m" style="left:1702px;top:954px;color:#f0506e;"><span class="k" style="width:39px">返回到</span> user32.sub_76E74F00+3AC <span class="k" style="width:13px">自</span> user32.sub_76E94780</div>
<div style="position:absolute;left:1624px;top:813px;width:2px;height:138px;background:#f6867c;"></div>
<div style="position:absolute;left:1624px;top:813px;width:5px;height:2px;background:#f6867c;"></div>
<div style="position:absolute;left:1624px;top:949px;width:5px;height:2px;background:#f6867c;"></div>
<div style="position:absolute;left:1624px;top:956px;width:2px;height:11px;background:#f6867c;"></div>
<div style="position:absolute;left:1624px;top:956px;width:5px;height:2px;background:#f6867c;"></div>
<svg class="i" style="left:2544.5px;top:725px" width="10" height="8"><path d="M1 8L5 .5L9 8z" fill="#a8a8a8"/></svg>
<svg class="i" style="left:2544.5px;top:956px" width="10" height="8"><path d="M1 0L5 7.500L9 0z" fill="#a8a8a8"/></svg>
<div style="position:absolute;left:2544.5px;top:737px;width:10px;height:215px;background:#424242;border-radius:5px"></div>
<div style="position:absolute;left:2544.5px;top:926px;width:10px;height:25px;background:#757575;border-radius:5px"></div>
<svg class="i" style="left:1555px;top:972px" width="8" height="10"><path d="M8 1L.5 5L8 9z" fill="#a8a8a8"/></svg>
<svg class="i" style="left:2528px;top:972px" width="8" height="10"><path d="M0 1L7.500 5L0 9z" fill="#a8a8a8"/></svg>
<div style="position:absolute;left:1567px;top:972px;width:957px;height:10px;background:#424242;border-radius:5px"></div>
<div style="position:absolute;left:1567px;top:972px;width:344px;height:10px;background:#757575;border-radius:5px"></div>
<div class="t u" style="left:1px;top:998px;color:#e6e6e6;"><span class="k" style="width:24px">命令</span><span class="ua">:</span></div>
<div style="position:absolute;left:38px;top:993px;width:2416px;height:20px;background:#333333;"></div>
<div class="t u" style="left:2460px;top:998px;color:#e6e6e6;"><span class="k" style="width:24px">默认</span></div>
<svg class="i" style="left:2547px;top:1002px" width="7" height="5"><path d="M0 0L3.500 4.500L7 0z" fill="#a0a0a0"/></svg>
<div class="t u" style="left:13px;top:1023px;color:#a8a838;"><span class="k" style="width:36px">已暂停</span></div>
<div class="t u" style="left:66px;top:1025px;color:#e6e6e6;"><span class="ua">crackme.exe: 004013CC -&gt; 004013CD (0x00000002 bytes)</span></div>
<div class="t u" style="left:2421px;top:1025px;color:#e6e6e6;"><span class="k" style="width:60px">已调试时间</span><span class="ua">:</span></div>
<div class="t u" style="left:2499px;top:1025px;color:#e6e6e6;"><span class="ua">2:01:21:53</span></div></body></html>
